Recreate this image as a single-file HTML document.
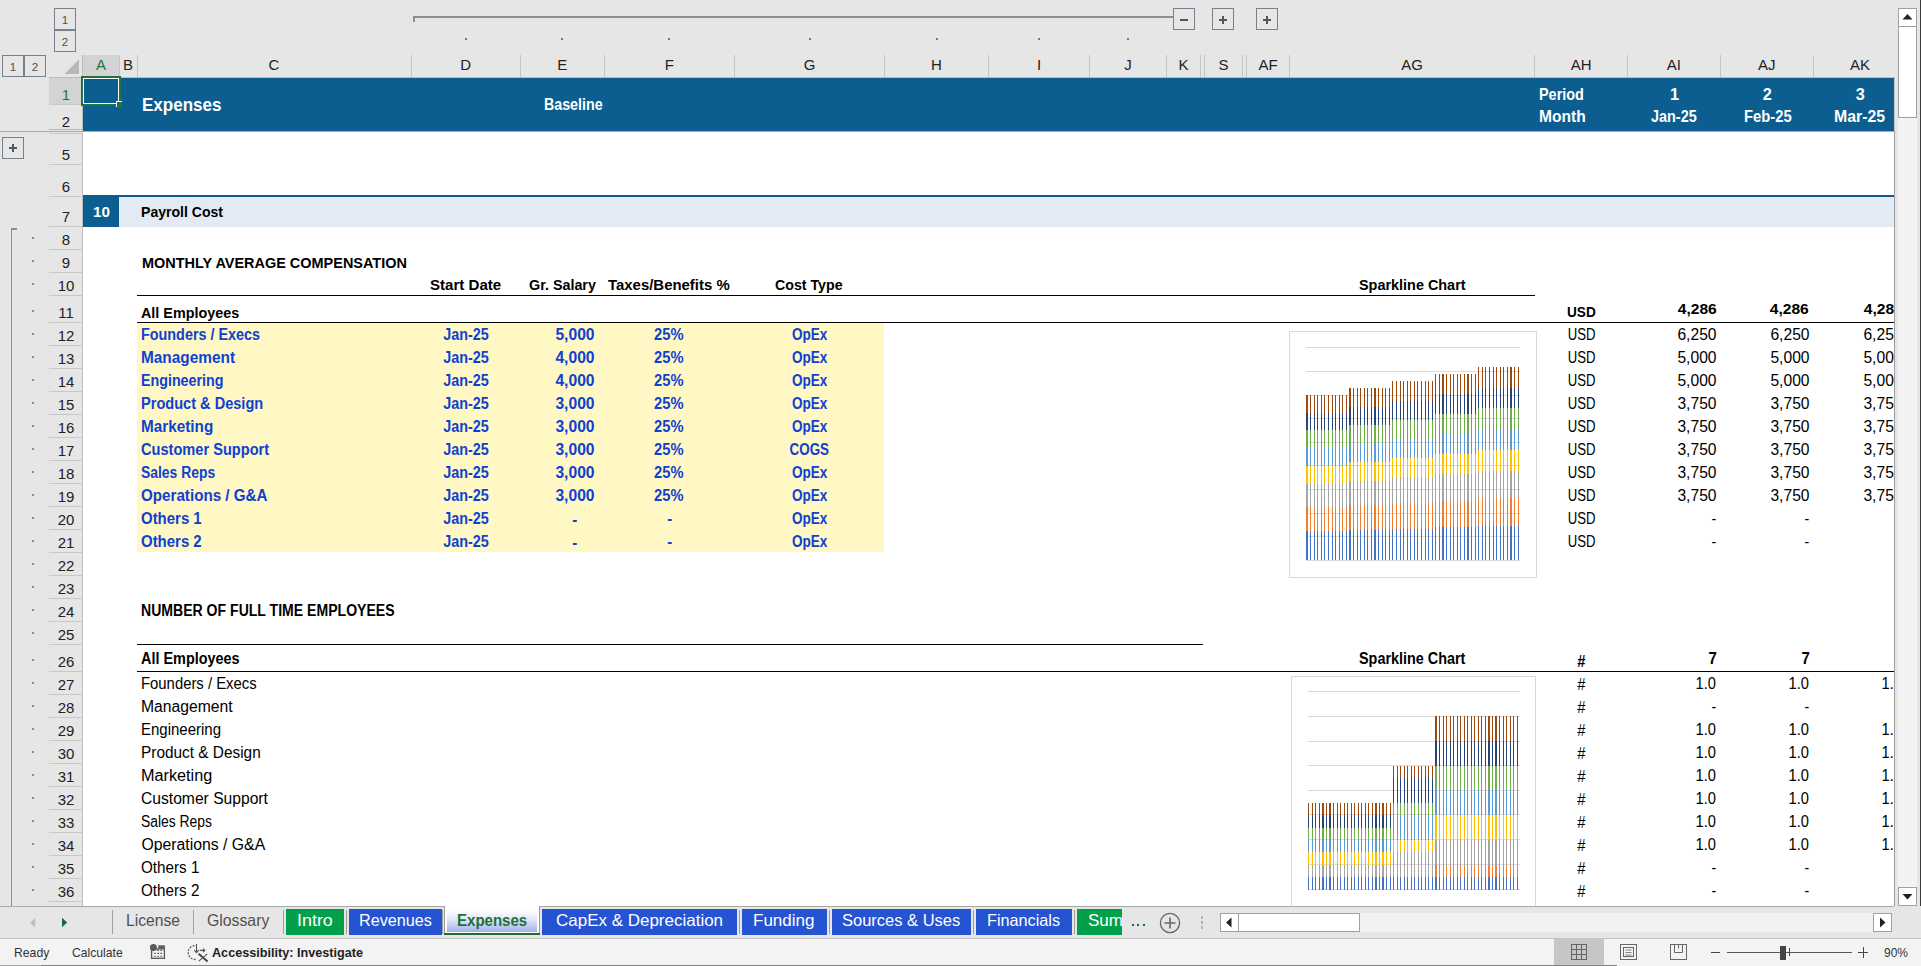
<!DOCTYPE html><html><head><meta charset="utf-8"><style>
html,body{margin:0;padding:0}
body{width:1921px;height:966px;overflow:hidden;position:relative;background:#e6e6e6;font-family:"Liberation Sans", sans-serif}
.b{position:absolute}
.t{position:absolute;white-space:nowrap;line-height:1}
</style></head><body>
<div class=b style='left:54px;top:8px;width:22.00px;height:22.00px;border:1px solid #77808c;box-sizing:border-box;'></div><div class=t style='left:54px;top:9px;width:22px;height:22px;line-height:22px;text-align:center;font-size:11.5px;color:#505050'>1</div><div class=b style='left:54px;top:30px;width:22.00px;height:22.00px;border:1px solid #77808c;box-sizing:border-box;'></div><div class=t style='left:54px;top:31px;width:22px;height:22px;line-height:22px;text-align:center;font-size:11.5px;color:#505050'>2</div><div class=b style='left:2px;top:55px;width:22.00px;height:22.00px;border:1px solid #77808c;box-sizing:border-box;'></div><div class=t style='left:2px;top:56px;width:22px;height:22px;line-height:22px;text-align:center;font-size:11.5px;color:#505050'>1</div><div class=b style='left:24px;top:55px;width:22.00px;height:22.00px;border:1px solid #77808c;box-sizing:border-box;'></div><div class=t style='left:24px;top:56px;width:22px;height:22px;line-height:22px;text-align:center;font-size:11.5px;color:#505050'>2</div><div class=b style='left:413px;top:16px;width:760.00px;height:2.00px;background:#8f8f8f'></div><div class=b style='left:413px;top:16px;width:2.00px;height:6.00px;background:#8f8f8f'></div><div class=b style='left:465px;top:38px;width:2.00px;height:2.00px;background:#7a7a7a'></div><div class=b style='left:561px;top:38px;width:2.00px;height:2.00px;background:#7a7a7a'></div><div class=b style='left:668px;top:38px;width:2.00px;height:2.00px;background:#7a7a7a'></div><div class=b style='left:809px;top:38px;width:2.00px;height:2.00px;background:#7a7a7a'></div><div class=b style='left:936px;top:38px;width:2.00px;height:2.00px;background:#7a7a7a'></div><div class=b style='left:1038px;top:38px;width:2.00px;height:2.00px;background:#7a7a7a'></div><div class=b style='left:1127px;top:38px;width:2.00px;height:2.00px;background:#7a7a7a'></div><div class=b style='left:1173px;top:8px;width:22.00px;height:22.00px;border:1px solid #77808c;box-sizing:border-box;'></div><div class=b style='left:1180.0px;top:19.0px;width:8.00px;height:2.00px;background:#555'></div><div class=b style='left:1212px;top:8px;width:22.00px;height:22.00px;border:1px solid #77808c;box-sizing:border-box;'></div><div class=b style='left:1219.0px;top:19.0px;width:8.00px;height:2.00px;background:#555'></div><div class=b style='left:1222.0px;top:16.0px;width:2.00px;height:8.00px;background:#555'></div><div class=b style='left:1256px;top:8px;width:22.00px;height:22.00px;border:1px solid #77808c;box-sizing:border-box;'></div><div class=b style='left:1263.0px;top:19.0px;width:8.00px;height:2.00px;background:#555'></div><div class=b style='left:1266.0px;top:16.0px;width:2.00px;height:8.00px;background:#555'></div><svg class=b style='left:63px;top:59px' width='18' height='17'><polygon points='16,0.3 16,15 1.5,15' fill='#b8b8b8'/></svg><div class=b style='left:83px;top:55px;width:1811.40px;height:22.00px;background:#e6e6e6'></div><div class=b style='left:83px;top:55px;width:36.00px;height:22.00px;background:#d3d3d3'></div><div class=b style='left:49px;top:76.5px;width:1845.40px;height:1.00px;background:#bcbcbc'></div><div class=b style='left:118.5px;top:55px;width:1.00px;height:22.00px;background:#c4c4c4'></div><div class=b style='left:136.5px;top:55px;width:1.00px;height:22.00px;background:#c4c4c4'></div><div class=b style='left:410.5px;top:55px;width:1.00px;height:22.00px;background:#c4c4c4'></div><div class=b style='left:520.0px;top:55px;width:1.00px;height:22.00px;background:#c4c4c4'></div><div class=b style='left:603.5px;top:55px;width:1.00px;height:22.00px;background:#c4c4c4'></div><div class=b style='left:734.0px;top:55px;width:1.00px;height:22.00px;background:#c4c4c4'></div><div class=b style='left:884.0px;top:55px;width:1.00px;height:22.00px;background:#c4c4c4'></div><div class=b style='left:988.0px;top:55px;width:1.00px;height:22.00px;background:#c4c4c4'></div><div class=b style='left:1089.0px;top:55px;width:1.00px;height:22.00px;background:#c4c4c4'></div><div class=b style='left:1166.25px;top:55px;width:1.00px;height:22.00px;background:#c4c4c4'></div><div class=b style='left:1200.0px;top:55px;width:1.00px;height:22.00px;background:#c4c4c4'></div><div class=b style='left:1204.0px;top:55px;width:1.00px;height:22.00px;background:#c4c4c4'></div><div class=b style='left:1242.0px;top:55px;width:1.00px;height:22.00px;background:#c4c4c4'></div><div class=b style='left:1246.0px;top:55px;width:1.00px;height:22.00px;background:#c4c4c4'></div><div class=b style='left:1289.0px;top:55px;width:1.00px;height:22.00px;background:#c4c4c4'></div><div class=b style='left:1534.2px;top:55px;width:1.00px;height:22.00px;background:#c4c4c4'></div><div class=b style='left:1627.0px;top:55px;width:1.00px;height:22.00px;background:#c4c4c4'></div><div class=b style='left:1719.8px;top:55px;width:1.00px;height:22.00px;background:#c4c4c4'></div><div class=b style='left:1812.9px;top:55px;width:1.00px;height:22.00px;background:#c4c4c4'></div><div class=t style='left:61.00px;width:80px;text-align:center;top:57.45px;font-size:15px;color:#217346'>A</div><div class=t style='left:88.00px;width:80px;text-align:center;top:57.45px;font-size:15px;color:#222'>B</div><div class=t style='left:234.00px;width:80px;text-align:center;top:57.45px;font-size:15px;color:#222'>C</div><div class=t style='left:425.75px;width:80px;text-align:center;top:57.45px;font-size:15px;color:#222'>D</div><div class=t style='left:522.25px;width:80px;text-align:center;top:57.45px;font-size:15px;color:#222'>E</div><div class=t style='left:629.25px;width:80px;text-align:center;top:57.45px;font-size:15px;color:#222'>F</div><div class=t style='left:769.50px;width:80px;text-align:center;top:57.45px;font-size:15px;color:#222'>G</div><div class=t style='left:896.50px;width:80px;text-align:center;top:57.45px;font-size:15px;color:#222'>H</div><div class=t style='left:999.00px;width:80px;text-align:center;top:57.45px;font-size:15px;color:#222'>I</div><div class=t style='left:1088.12px;width:80px;text-align:center;top:57.45px;font-size:15px;color:#222'>J</div><div class=t style='left:1143.62px;width:80px;text-align:center;top:57.45px;font-size:15px;color:#222'>K</div><div class=t style='left:1183.50px;width:80px;text-align:center;top:57.45px;font-size:15px;color:#222'>S</div><div class=t style='left:1228.00px;width:80px;text-align:center;top:57.45px;font-size:15px;color:#222'>AF</div><div class=t style='left:1372.10px;width:80px;text-align:center;top:57.45px;font-size:15px;color:#222'>AG</div><div class=t style='left:1541.10px;width:80px;text-align:center;top:57.45px;font-size:15px;color:#222'>AH</div><div class=t style='left:1633.90px;width:80px;text-align:center;top:57.45px;font-size:15px;color:#222'>AI</div><div class=t style='left:1726.85px;width:80px;text-align:center;top:57.45px;font-size:15px;color:#222'>AJ</div><div class=t style='left:1820.10px;width:80px;text-align:center;top:57.45px;font-size:15px;color:#222'>AK</div><div class=b style='left:49px;top:77px;width:33.50px;height:829.00px;background:#e6e6e6'></div><div class=b style='left:49px;top:77px;width:33.50px;height:27.50px;background:#d3d3d3'></div><div class=b style='left:82px;top:55px;width:1.00px;height:851.00px;background:#bcbcbc'></div><div class=b style='left:49px;top:104.0px;width:33.00px;height:1.00px;background:#c8c8c8'></div><div class=t style='left:26px;width:80px;text-align:center;top:87.25px;font-size:15px;color:#217346'>1</div><div class=b style='left:49px;top:130.5px;width:33.00px;height:1.00px;background:#c8c8c8'></div><div class=t style='left:26px;width:80px;text-align:center;top:113.75px;font-size:15px;color:#222'>2</div><div class=b style='left:49px;top:164.1px;width:33.00px;height:1.00px;background:#c8c8c8'></div><div class=t style='left:26px;width:80px;text-align:center;top:147.35px;font-size:15px;color:#222'>5</div><div class=b style='left:49px;top:196.1px;width:33.00px;height:1.00px;background:#c8c8c8'></div><div class=t style='left:26px;width:80px;text-align:center;top:179.35px;font-size:15px;color:#222'>6</div><div class=b style='left:49px;top:226.2px;width:33.00px;height:1.00px;background:#c8c8c8'></div><div class=t style='left:26px;width:80px;text-align:center;top:209.45px;font-size:15px;color:#222'>7</div><div class=b style='left:49px;top:248.5px;width:33.00px;height:1.00px;background:#c8c8c8'></div><div class=t style='left:26px;width:80px;text-align:center;top:231.75px;font-size:15px;color:#222'>8</div><div class=b style='left:49px;top:271.5px;width:33.00px;height:1.00px;background:#c8c8c8'></div><div class=t style='left:26px;width:80px;text-align:center;top:254.75px;font-size:15px;color:#222'>9</div><div class=b style='left:49px;top:294.5px;width:33.00px;height:1.00px;background:#c8c8c8'></div><div class=t style='left:26px;width:80px;text-align:center;top:277.75px;font-size:15px;color:#222'>10</div><div class=b style='left:49px;top:321.5px;width:33.00px;height:1.00px;background:#c8c8c8'></div><div class=t style='left:26px;width:80px;text-align:center;top:304.75px;font-size:15px;color:#222'>11</div><div class=b style='left:49px;top:344.5px;width:33.00px;height:1.00px;background:#c8c8c8'></div><div class=t style='left:26px;width:80px;text-align:center;top:327.75px;font-size:15px;color:#222'>12</div><div class=b style='left:49px;top:367.5px;width:33.00px;height:1.00px;background:#c8c8c8'></div><div class=t style='left:26px;width:80px;text-align:center;top:350.75px;font-size:15px;color:#222'>13</div><div class=b style='left:49px;top:390.5px;width:33.00px;height:1.00px;background:#c8c8c8'></div><div class=t style='left:26px;width:80px;text-align:center;top:373.75px;font-size:15px;color:#222'>14</div><div class=b style='left:49px;top:413.5px;width:33.00px;height:1.00px;background:#c8c8c8'></div><div class=t style='left:26px;width:80px;text-align:center;top:396.75px;font-size:15px;color:#222'>15</div><div class=b style='left:49px;top:436.5px;width:33.00px;height:1.00px;background:#c8c8c8'></div><div class=t style='left:26px;width:80px;text-align:center;top:419.75px;font-size:15px;color:#222'>16</div><div class=b style='left:49px;top:459.5px;width:33.00px;height:1.00px;background:#c8c8c8'></div><div class=t style='left:26px;width:80px;text-align:center;top:442.75px;font-size:15px;color:#222'>17</div><div class=b style='left:49px;top:482.5px;width:33.00px;height:1.00px;background:#c8c8c8'></div><div class=t style='left:26px;width:80px;text-align:center;top:465.75px;font-size:15px;color:#222'>18</div><div class=b style='left:49px;top:505.5px;width:33.00px;height:1.00px;background:#c8c8c8'></div><div class=t style='left:26px;width:80px;text-align:center;top:488.75px;font-size:15px;color:#222'>19</div><div class=b style='left:49px;top:528.5px;width:33.00px;height:1.00px;background:#c8c8c8'></div><div class=t style='left:26px;width:80px;text-align:center;top:511.75px;font-size:15px;color:#222'>20</div><div class=b style='left:49px;top:551.5px;width:33.00px;height:1.00px;background:#c8c8c8'></div><div class=t style='left:26px;width:80px;text-align:center;top:534.75px;font-size:15px;color:#222'>21</div><div class=b style='left:49px;top:574.5px;width:33.00px;height:1.00px;background:#c8c8c8'></div><div class=t style='left:26px;width:80px;text-align:center;top:557.75px;font-size:15px;color:#222'>22</div><div class=b style='left:49px;top:597.5px;width:33.00px;height:1.00px;background:#c8c8c8'></div><div class=t style='left:26px;width:80px;text-align:center;top:580.75px;font-size:15px;color:#222'>23</div><div class=b style='left:49px;top:620.5px;width:33.00px;height:1.00px;background:#c8c8c8'></div><div class=t style='left:26px;width:80px;text-align:center;top:603.75px;font-size:15px;color:#222'>24</div><div class=b style='left:49px;top:643.5px;width:33.00px;height:1.00px;background:#c8c8c8'></div><div class=t style='left:26px;width:80px;text-align:center;top:626.75px;font-size:15px;color:#222'>25</div><div class=b style='left:49px;top:670.5px;width:33.00px;height:1.00px;background:#c8c8c8'></div><div class=t style='left:26px;width:80px;text-align:center;top:653.75px;font-size:15px;color:#222'>26</div><div class=b style='left:49px;top:693.5px;width:33.00px;height:1.00px;background:#c8c8c8'></div><div class=t style='left:26px;width:80px;text-align:center;top:676.75px;font-size:15px;color:#222'>27</div><div class=b style='left:49px;top:716.5px;width:33.00px;height:1.00px;background:#c8c8c8'></div><div class=t style='left:26px;width:80px;text-align:center;top:699.75px;font-size:15px;color:#222'>28</div><div class=b style='left:49px;top:739.5px;width:33.00px;height:1.00px;background:#c8c8c8'></div><div class=t style='left:26px;width:80px;text-align:center;top:722.75px;font-size:15px;color:#222'>29</div><div class=b style='left:49px;top:762.5px;width:33.00px;height:1.00px;background:#c8c8c8'></div><div class=t style='left:26px;width:80px;text-align:center;top:745.75px;font-size:15px;color:#222'>30</div><div class=b style='left:49px;top:785.5px;width:33.00px;height:1.00px;background:#c8c8c8'></div><div class=t style='left:26px;width:80px;text-align:center;top:768.75px;font-size:15px;color:#222'>31</div><div class=b style='left:49px;top:808.5px;width:33.00px;height:1.00px;background:#c8c8c8'></div><div class=t style='left:26px;width:80px;text-align:center;top:791.75px;font-size:15px;color:#222'>32</div><div class=b style='left:49px;top:831.5px;width:33.00px;height:1.00px;background:#c8c8c8'></div><div class=t style='left:26px;width:80px;text-align:center;top:814.75px;font-size:15px;color:#222'>33</div><div class=b style='left:49px;top:854.5px;width:33.00px;height:1.00px;background:#c8c8c8'></div><div class=t style='left:26px;width:80px;text-align:center;top:837.75px;font-size:15px;color:#222'>34</div><div class=b style='left:49px;top:877.5px;width:33.00px;height:1.00px;background:#c8c8c8'></div><div class=t style='left:26px;width:80px;text-align:center;top:860.75px;font-size:15px;color:#222'>35</div><div class=b style='left:49px;top:900.5px;width:33.00px;height:1.00px;background:#c8c8c8'></div><div class=t style='left:26px;width:80px;text-align:center;top:883.75px;font-size:15px;color:#222'>36</div><div class=b style='left:49px;top:923.5px;width:33.00px;height:1.00px;background:#c8c8c8'></div><div class=b style='left:49px;top:133px;width:33.00px;height:1.00px;background:#c8c8c8'></div><div class=b style='left:49px;top:129px;width:33.00px;height:1.00px;background:#b8b8b8'></div><div class=b style='left:0px;top:130.5px;width:83.00px;height:1.00px;background:#a8a8a8'></div><div class=b style='left:2px;top:137px;width:22.00px;height:22.00px;border:1px solid #77808c;box-sizing:border-box;'></div><div class=b style='left:9px;top:147px;width:8.00px;height:2.00px;background:#555'></div><div class=b style='left:12px;top:144px;width:2.00px;height:8.00px;background:#555'></div><div class=b style='left:10.5px;top:228px;width:1.50px;height:678.00px;background:#8f8f8f'></div><div class=b style='left:10.5px;top:228px;width:6.00px;height:1.50px;background:#8f8f8f'></div><div class=b style='left:32px;top:237.0px;width:2.00px;height:2.00px;background:#8a8a8a'></div><div class=b style='left:32px;top:260.0px;width:2.00px;height:2.00px;background:#8a8a8a'></div><div class=b style='left:32px;top:283.0px;width:2.00px;height:2.00px;background:#8a8a8a'></div><div class=b style='left:32px;top:310.0px;width:2.00px;height:2.00px;background:#8a8a8a'></div><div class=b style='left:32px;top:333.0px;width:2.00px;height:2.00px;background:#8a8a8a'></div><div class=b style='left:32px;top:356.0px;width:2.00px;height:2.00px;background:#8a8a8a'></div><div class=b style='left:32px;top:379.0px;width:2.00px;height:2.00px;background:#8a8a8a'></div><div class=b style='left:32px;top:402.0px;width:2.00px;height:2.00px;background:#8a8a8a'></div><div class=b style='left:32px;top:425.0px;width:2.00px;height:2.00px;background:#8a8a8a'></div><div class=b style='left:32px;top:448.0px;width:2.00px;height:2.00px;background:#8a8a8a'></div><div class=b style='left:32px;top:471.0px;width:2.00px;height:2.00px;background:#8a8a8a'></div><div class=b style='left:32px;top:494.0px;width:2.00px;height:2.00px;background:#8a8a8a'></div><div class=b style='left:32px;top:517.0px;width:2.00px;height:2.00px;background:#8a8a8a'></div><div class=b style='left:32px;top:540.0px;width:2.00px;height:2.00px;background:#8a8a8a'></div><div class=b style='left:32px;top:563.0px;width:2.00px;height:2.00px;background:#8a8a8a'></div><div class=b style='left:32px;top:586.0px;width:2.00px;height:2.00px;background:#8a8a8a'></div><div class=b style='left:32px;top:609.0px;width:2.00px;height:2.00px;background:#8a8a8a'></div><div class=b style='left:32px;top:632.0px;width:2.00px;height:2.00px;background:#8a8a8a'></div><div class=b style='left:32px;top:659.0px;width:2.00px;height:2.00px;background:#8a8a8a'></div><div class=b style='left:32px;top:682.0px;width:2.00px;height:2.00px;background:#8a8a8a'></div><div class=b style='left:32px;top:705.0px;width:2.00px;height:2.00px;background:#8a8a8a'></div><div class=b style='left:32px;top:728.0px;width:2.00px;height:2.00px;background:#8a8a8a'></div><div class=b style='left:32px;top:751.0px;width:2.00px;height:2.00px;background:#8a8a8a'></div><div class=b style='left:32px;top:774.0px;width:2.00px;height:2.00px;background:#8a8a8a'></div><div class=b style='left:32px;top:797.0px;width:2.00px;height:2.00px;background:#8a8a8a'></div><div class=b style='left:32px;top:820.0px;width:2.00px;height:2.00px;background:#8a8a8a'></div><div class=b style='left:32px;top:843.0px;width:2.00px;height:2.00px;background:#8a8a8a'></div><div class=b style='left:32px;top:866.0px;width:2.00px;height:2.00px;background:#8a8a8a'></div><div class=b style='left:32px;top:889.0px;width:2.00px;height:2.00px;background:#8a8a8a'></div><div class=b style='left:32px;top:912.0px;width:2.00px;height:2.00px;background:#8a8a8a'></div><div class=b style='left:83px;top:77px;width:1811.4px;height:829px;overflow:hidden;background:#fff'><div class=b style='left:-83px;top:-77px;width:1921px;height:966px'><div class=b style='left:83px;top:77px;width:1811.40px;height:54.00px;background:#0c5e91'></div><div class=b style='left:83px;top:131px;width:1811.40px;height:1.00px;background:#ababab'></div><div class=b style='left:83px;top:195px;width:1811.40px;height:2.00px;background:#0c5e91'></div><div class=b style='left:83px;top:197px;width:1811.40px;height:29.70px;background:#e3eaf3'></div><div class=b style='left:83px;top:197px;width:36.00px;height:29.70px;background:#0c5e91'></div><div class=b style='left:137px;top:322.5px;width:747.00px;height:229.50px;background:#fff8c5'></div><div class=b style='left:137px;top:294.8px;width:1397.70px;height:1.00px;background:#000'></div><div class=b style='left:137px;top:321.8px;width:1757.40px;height:1.00px;background:#000'></div><div class=b style='left:137px;top:643.9px;width:1065.60px;height:1.00px;background:#000'></div><div class=b style='left:137px;top:670.9px;width:1757.40px;height:1.00px;background:#000'></div><svg class=b style='left:0;top:0' width='1921' height='966' shape-rendering='crispEdges'><rect x='1289.5' y='331.5' width='247' height='246' fill='#fff' stroke='#d9d9d9'/><rect x='1306' y='347' width='214' height='1' fill='#d9d9d9'/><rect x='1306' y='371' width='214' height='1' fill='#d9d9d9'/><rect x='1306' y='395' width='214' height='1' fill='#d9d9d9'/><rect x='1306' y='418' width='214' height='1' fill='#d9d9d9'/><rect x='1306' y='442' width='214' height='1' fill='#d9d9d9'/><rect x='1306' y='465' width='214' height='1' fill='#d9d9d9'/><rect x='1306' y='489' width='214' height='1' fill='#d9d9d9'/><rect x='1306' y='513' width='214' height='1' fill='#d9d9d9'/><rect x='1306' y='536' width='214' height='1' fill='#d9d9d9'/><rect x='1306' y='560' width='214' height='1' fill='#d9d9d9'/><rect x='1306' y='531' width='2' height='29' fill='#4472C4'/><rect x='1306' y='507' width='2' height='24' fill='#ED7D31'/><rect x='1306' y='484' width='2' height='23' fill='#A5A5A5'/><rect x='1306' y='466' width='2' height='18' fill='#FFC000'/><rect x='1306' y='448' width='2' height='18' fill='#5B9BD5'/><rect x='1306' y='430' width='2' height='18' fill='#70AD47'/><rect x='1306' y='413' width='2' height='17' fill='#264478'/><rect x='1306' y='395' width='2' height='18' fill='#9E480E'/><rect x='1310' y='531' width='1' height='29' fill='#4472C4'/><rect x='1310' y='507' width='1' height='24' fill='#ED7D31'/><rect x='1310' y='484' width='1' height='23' fill='#A5A5A5'/><rect x='1310' y='466' width='1' height='18' fill='#FFC000'/><rect x='1310' y='448' width='1' height='18' fill='#5B9BD5'/><rect x='1310' y='430' width='1' height='18' fill='#70AD47'/><rect x='1310' y='413' width='1' height='17' fill='#264478'/><rect x='1310' y='395' width='1' height='18' fill='#9E480E'/><rect x='1314' y='531' width='1' height='29' fill='#4472C4'/><rect x='1314' y='507' width='1' height='24' fill='#ED7D31'/><rect x='1314' y='484' width='1' height='23' fill='#A5A5A5'/><rect x='1314' y='466' width='1' height='18' fill='#FFC000'/><rect x='1314' y='448' width='1' height='18' fill='#5B9BD5'/><rect x='1314' y='430' width='1' height='18' fill='#70AD47'/><rect x='1314' y='413' width='1' height='17' fill='#264478'/><rect x='1314' y='395' width='1' height='18' fill='#9E480E'/><rect x='1317' y='531' width='1' height='29' fill='#4472C4'/><rect x='1317' y='507' width='1' height='24' fill='#ED7D31'/><rect x='1317' y='484' width='1' height='23' fill='#A5A5A5'/><rect x='1317' y='466' width='1' height='18' fill='#FFC000'/><rect x='1317' y='448' width='1' height='18' fill='#5B9BD5'/><rect x='1317' y='430' width='1' height='18' fill='#70AD47'/><rect x='1317' y='413' width='1' height='17' fill='#264478'/><rect x='1317' y='395' width='1' height='18' fill='#9E480E'/><rect x='1321' y='531' width='1' height='29' fill='#4472C4'/><rect x='1321' y='507' width='1' height='24' fill='#ED7D31'/><rect x='1321' y='484' width='1' height='23' fill='#A5A5A5'/><rect x='1321' y='466' width='1' height='18' fill='#FFC000'/><rect x='1321' y='448' width='1' height='18' fill='#5B9BD5'/><rect x='1321' y='430' width='1' height='18' fill='#70AD47'/><rect x='1321' y='413' width='1' height='17' fill='#264478'/><rect x='1321' y='395' width='1' height='18' fill='#9E480E'/><rect x='1324' y='531' width='1' height='29' fill='#4472C4'/><rect x='1324' y='507' width='1' height='24' fill='#ED7D31'/><rect x='1324' y='484' width='1' height='23' fill='#A5A5A5'/><rect x='1324' y='466' width='1' height='18' fill='#FFC000'/><rect x='1324' y='448' width='1' height='18' fill='#5B9BD5'/><rect x='1324' y='430' width='1' height='18' fill='#70AD47'/><rect x='1324' y='413' width='1' height='17' fill='#264478'/><rect x='1324' y='395' width='1' height='18' fill='#9E480E'/><rect x='1328' y='531' width='1' height='29' fill='#4472C4'/><rect x='1328' y='507' width='1' height='24' fill='#ED7D31'/><rect x='1328' y='484' width='1' height='23' fill='#A5A5A5'/><rect x='1328' y='466' width='1' height='18' fill='#FFC000'/><rect x='1328' y='448' width='1' height='18' fill='#5B9BD5'/><rect x='1328' y='430' width='1' height='18' fill='#70AD47'/><rect x='1328' y='413' width='1' height='17' fill='#264478'/><rect x='1328' y='395' width='1' height='18' fill='#9E480E'/><rect x='1332' y='531' width='1' height='29' fill='#4472C4'/><rect x='1332' y='507' width='1' height='24' fill='#ED7D31'/><rect x='1332' y='484' width='1' height='23' fill='#A5A5A5'/><rect x='1332' y='466' width='1' height='18' fill='#FFC000'/><rect x='1332' y='448' width='1' height='18' fill='#5B9BD5'/><rect x='1332' y='430' width='1' height='18' fill='#70AD47'/><rect x='1332' y='413' width='1' height='17' fill='#264478'/><rect x='1332' y='395' width='1' height='18' fill='#9E480E'/><rect x='1335' y='531' width='1' height='29' fill='#4472C4'/><rect x='1335' y='507' width='1' height='24' fill='#ED7D31'/><rect x='1335' y='484' width='1' height='23' fill='#A5A5A5'/><rect x='1335' y='466' width='1' height='18' fill='#FFC000'/><rect x='1335' y='448' width='1' height='18' fill='#5B9BD5'/><rect x='1335' y='430' width='1' height='18' fill='#70AD47'/><rect x='1335' y='413' width='1' height='17' fill='#264478'/><rect x='1335' y='395' width='1' height='18' fill='#9E480E'/><rect x='1339' y='531' width='1' height='29' fill='#4472C4'/><rect x='1339' y='507' width='1' height='24' fill='#ED7D31'/><rect x='1339' y='484' width='1' height='23' fill='#A5A5A5'/><rect x='1339' y='466' width='1' height='18' fill='#FFC000'/><rect x='1339' y='448' width='1' height='18' fill='#5B9BD5'/><rect x='1339' y='430' width='1' height='18' fill='#70AD47'/><rect x='1339' y='413' width='1' height='17' fill='#264478'/><rect x='1339' y='395' width='1' height='18' fill='#9E480E'/><rect x='1342' y='531' width='1' height='29' fill='#4472C4'/><rect x='1342' y='507' width='1' height='24' fill='#ED7D31'/><rect x='1342' y='484' width='1' height='23' fill='#A5A5A5'/><rect x='1342' y='466' width='1' height='18' fill='#FFC000'/><rect x='1342' y='448' width='1' height='18' fill='#5B9BD5'/><rect x='1342' y='430' width='1' height='18' fill='#70AD47'/><rect x='1342' y='413' width='1' height='17' fill='#264478'/><rect x='1342' y='395' width='1' height='18' fill='#9E480E'/><rect x='1346' y='531' width='1' height='29' fill='#4472C4'/><rect x='1346' y='507' width='1' height='24' fill='#ED7D31'/><rect x='1346' y='484' width='1' height='23' fill='#A5A5A5'/><rect x='1346' y='466' width='1' height='18' fill='#FFC000'/><rect x='1346' y='448' width='1' height='18' fill='#5B9BD5'/><rect x='1346' y='430' width='1' height='18' fill='#70AD47'/><rect x='1346' y='413' width='1' height='17' fill='#264478'/><rect x='1346' y='395' width='1' height='18' fill='#9E480E'/><rect x='1349' y='530' width='2' height='30' fill='#4472C4'/><rect x='1349' y='505' width='2' height='25' fill='#ED7D31'/><rect x='1349' y='481' width='2' height='24' fill='#A5A5A5'/><rect x='1349' y='462' width='2' height='19' fill='#FFC000'/><rect x='1349' y='444' width='2' height='18' fill='#5B9BD5'/><rect x='1349' y='425' width='2' height='19' fill='#70AD47'/><rect x='1349' y='407' width='2' height='18' fill='#264478'/><rect x='1349' y='388' width='2' height='19' fill='#9E480E'/><rect x='1353' y='530' width='1' height='30' fill='#4472C4'/><rect x='1353' y='505' width='1' height='25' fill='#ED7D31'/><rect x='1353' y='481' width='1' height='24' fill='#A5A5A5'/><rect x='1353' y='462' width='1' height='19' fill='#FFC000'/><rect x='1353' y='444' width='1' height='18' fill='#5B9BD5'/><rect x='1353' y='425' width='1' height='19' fill='#70AD47'/><rect x='1353' y='407' width='1' height='18' fill='#264478'/><rect x='1353' y='388' width='1' height='19' fill='#9E480E'/><rect x='1357' y='530' width='1' height='30' fill='#4472C4'/><rect x='1357' y='505' width='1' height='25' fill='#ED7D31'/><rect x='1357' y='481' width='1' height='24' fill='#A5A5A5'/><rect x='1357' y='462' width='1' height='19' fill='#FFC000'/><rect x='1357' y='444' width='1' height='18' fill='#5B9BD5'/><rect x='1357' y='425' width='1' height='19' fill='#70AD47'/><rect x='1357' y='407' width='1' height='18' fill='#264478'/><rect x='1357' y='388' width='1' height='19' fill='#9E480E'/><rect x='1360' y='530' width='1' height='30' fill='#4472C4'/><rect x='1360' y='505' width='1' height='25' fill='#ED7D31'/><rect x='1360' y='481' width='1' height='24' fill='#A5A5A5'/><rect x='1360' y='462' width='1' height='19' fill='#FFC000'/><rect x='1360' y='444' width='1' height='18' fill='#5B9BD5'/><rect x='1360' y='425' width='1' height='19' fill='#70AD47'/><rect x='1360' y='407' width='1' height='18' fill='#264478'/><rect x='1360' y='388' width='1' height='19' fill='#9E480E'/><rect x='1364' y='530' width='1' height='30' fill='#4472C4'/><rect x='1364' y='505' width='1' height='25' fill='#ED7D31'/><rect x='1364' y='481' width='1' height='24' fill='#A5A5A5'/><rect x='1364' y='462' width='1' height='19' fill='#FFC000'/><rect x='1364' y='444' width='1' height='18' fill='#5B9BD5'/><rect x='1364' y='425' width='1' height='19' fill='#70AD47'/><rect x='1364' y='407' width='1' height='18' fill='#264478'/><rect x='1364' y='388' width='1' height='19' fill='#9E480E'/><rect x='1367' y='530' width='1' height='30' fill='#4472C4'/><rect x='1367' y='505' width='1' height='25' fill='#ED7D31'/><rect x='1367' y='481' width='1' height='24' fill='#A5A5A5'/><rect x='1367' y='462' width='1' height='19' fill='#FFC000'/><rect x='1367' y='444' width='1' height='18' fill='#5B9BD5'/><rect x='1367' y='425' width='1' height='19' fill='#70AD47'/><rect x='1367' y='407' width='1' height='18' fill='#264478'/><rect x='1367' y='388' width='1' height='19' fill='#9E480E'/><rect x='1371' y='530' width='1' height='30' fill='#4472C4'/><rect x='1371' y='505' width='1' height='25' fill='#ED7D31'/><rect x='1371' y='481' width='1' height='24' fill='#A5A5A5'/><rect x='1371' y='462' width='1' height='19' fill='#FFC000'/><rect x='1371' y='444' width='1' height='18' fill='#5B9BD5'/><rect x='1371' y='425' width='1' height='19' fill='#70AD47'/><rect x='1371' y='407' width='1' height='18' fill='#264478'/><rect x='1371' y='388' width='1' height='19' fill='#9E480E'/><rect x='1374' y='530' width='2' height='30' fill='#4472C4'/><rect x='1374' y='505' width='2' height='25' fill='#ED7D31'/><rect x='1374' y='481' width='2' height='24' fill='#A5A5A5'/><rect x='1374' y='462' width='2' height='19' fill='#FFC000'/><rect x='1374' y='444' width='2' height='18' fill='#5B9BD5'/><rect x='1374' y='425' width='2' height='19' fill='#70AD47'/><rect x='1374' y='407' width='2' height='18' fill='#264478'/><rect x='1374' y='388' width='2' height='19' fill='#9E480E'/><rect x='1378' y='530' width='1' height='30' fill='#4472C4'/><rect x='1378' y='505' width='1' height='25' fill='#ED7D31'/><rect x='1378' y='481' width='1' height='24' fill='#A5A5A5'/><rect x='1378' y='462' width='1' height='19' fill='#FFC000'/><rect x='1378' y='444' width='1' height='18' fill='#5B9BD5'/><rect x='1378' y='425' width='1' height='19' fill='#70AD47'/><rect x='1378' y='407' width='1' height='18' fill='#264478'/><rect x='1378' y='388' width='1' height='19' fill='#9E480E'/><rect x='1382' y='530' width='1' height='30' fill='#4472C4'/><rect x='1382' y='505' width='1' height='25' fill='#ED7D31'/><rect x='1382' y='481' width='1' height='24' fill='#A5A5A5'/><rect x='1382' y='462' width='1' height='19' fill='#FFC000'/><rect x='1382' y='444' width='1' height='18' fill='#5B9BD5'/><rect x='1382' y='425' width='1' height='19' fill='#70AD47'/><rect x='1382' y='407' width='1' height='18' fill='#264478'/><rect x='1382' y='388' width='1' height='19' fill='#9E480E'/><rect x='1385' y='530' width='1' height='30' fill='#4472C4'/><rect x='1385' y='505' width='1' height='25' fill='#ED7D31'/><rect x='1385' y='481' width='1' height='24' fill='#A5A5A5'/><rect x='1385' y='462' width='1' height='19' fill='#FFC000'/><rect x='1385' y='444' width='1' height='18' fill='#5B9BD5'/><rect x='1385' y='425' width='1' height='19' fill='#70AD47'/><rect x='1385' y='407' width='1' height='18' fill='#264478'/><rect x='1385' y='388' width='1' height='19' fill='#9E480E'/><rect x='1389' y='530' width='1' height='30' fill='#4472C4'/><rect x='1389' y='505' width='1' height='25' fill='#ED7D31'/><rect x='1389' y='481' width='1' height='24' fill='#A5A5A5'/><rect x='1389' y='462' width='1' height='19' fill='#FFC000'/><rect x='1389' y='444' width='1' height='18' fill='#5B9BD5'/><rect x='1389' y='425' width='1' height='19' fill='#70AD47'/><rect x='1389' y='407' width='1' height='18' fill='#264478'/><rect x='1389' y='388' width='1' height='19' fill='#9E480E'/><rect x='1392' y='529' width='1' height='31' fill='#4472C4'/><rect x='1392' y='503' width='1' height='26' fill='#ED7D31'/><rect x='1392' y='477' width='1' height='26' fill='#A5A5A5'/><rect x='1392' y='458' width='1' height='19' fill='#FFC000'/><rect x='1392' y='439' width='1' height='19' fill='#5B9BD5'/><rect x='1392' y='420' width='1' height='19' fill='#70AD47'/><rect x='1392' y='401' width='1' height='19' fill='#264478'/><rect x='1392' y='381' width='1' height='20' fill='#9E480E'/><rect x='1396' y='529' width='1' height='31' fill='#4472C4'/><rect x='1396' y='503' width='1' height='26' fill='#ED7D31'/><rect x='1396' y='477' width='1' height='26' fill='#A5A5A5'/><rect x='1396' y='458' width='1' height='19' fill='#FFC000'/><rect x='1396' y='439' width='1' height='19' fill='#5B9BD5'/><rect x='1396' y='420' width='1' height='19' fill='#70AD47'/><rect x='1396' y='401' width='1' height='19' fill='#264478'/><rect x='1396' y='381' width='1' height='20' fill='#9E480E'/><rect x='1400' y='529' width='1' height='31' fill='#4472C4'/><rect x='1400' y='503' width='1' height='26' fill='#ED7D31'/><rect x='1400' y='477' width='1' height='26' fill='#A5A5A5'/><rect x='1400' y='458' width='1' height='19' fill='#FFC000'/><rect x='1400' y='439' width='1' height='19' fill='#5B9BD5'/><rect x='1400' y='420' width='1' height='19' fill='#70AD47'/><rect x='1400' y='401' width='1' height='19' fill='#264478'/><rect x='1400' y='381' width='1' height='20' fill='#9E480E'/><rect x='1403' y='529' width='1' height='31' fill='#4472C4'/><rect x='1403' y='503' width='1' height='26' fill='#ED7D31'/><rect x='1403' y='477' width='1' height='26' fill='#A5A5A5'/><rect x='1403' y='458' width='1' height='19' fill='#FFC000'/><rect x='1403' y='439' width='1' height='19' fill='#5B9BD5'/><rect x='1403' y='420' width='1' height='19' fill='#70AD47'/><rect x='1403' y='401' width='1' height='19' fill='#264478'/><rect x='1403' y='381' width='1' height='20' fill='#9E480E'/><rect x='1407' y='529' width='1' height='31' fill='#4472C4'/><rect x='1407' y='503' width='1' height='26' fill='#ED7D31'/><rect x='1407' y='477' width='1' height='26' fill='#A5A5A5'/><rect x='1407' y='458' width='1' height='19' fill='#FFC000'/><rect x='1407' y='439' width='1' height='19' fill='#5B9BD5'/><rect x='1407' y='420' width='1' height='19' fill='#70AD47'/><rect x='1407' y='401' width='1' height='19' fill='#264478'/><rect x='1407' y='381' width='1' height='20' fill='#9E480E'/><rect x='1410' y='529' width='1' height='31' fill='#4472C4'/><rect x='1410' y='503' width='1' height='26' fill='#ED7D31'/><rect x='1410' y='477' width='1' height='26' fill='#A5A5A5'/><rect x='1410' y='458' width='1' height='19' fill='#FFC000'/><rect x='1410' y='439' width='1' height='19' fill='#5B9BD5'/><rect x='1410' y='420' width='1' height='19' fill='#70AD47'/><rect x='1410' y='401' width='1' height='19' fill='#264478'/><rect x='1410' y='381' width='1' height='20' fill='#9E480E'/><rect x='1414' y='529' width='1' height='31' fill='#4472C4'/><rect x='1414' y='503' width='1' height='26' fill='#ED7D31'/><rect x='1414' y='477' width='1' height='26' fill='#A5A5A5'/><rect x='1414' y='458' width='1' height='19' fill='#FFC000'/><rect x='1414' y='439' width='1' height='19' fill='#5B9BD5'/><rect x='1414' y='420' width='1' height='19' fill='#70AD47'/><rect x='1414' y='401' width='1' height='19' fill='#264478'/><rect x='1414' y='381' width='1' height='20' fill='#9E480E'/><rect x='1417' y='529' width='1' height='31' fill='#4472C4'/><rect x='1417' y='503' width='1' height='26' fill='#ED7D31'/><rect x='1417' y='477' width='1' height='26' fill='#A5A5A5'/><rect x='1417' y='458' width='1' height='19' fill='#FFC000'/><rect x='1417' y='439' width='1' height='19' fill='#5B9BD5'/><rect x='1417' y='420' width='1' height='19' fill='#70AD47'/><rect x='1417' y='401' width='1' height='19' fill='#264478'/><rect x='1417' y='381' width='1' height='20' fill='#9E480E'/><rect x='1421' y='529' width='1' height='31' fill='#4472C4'/><rect x='1421' y='503' width='1' height='26' fill='#ED7D31'/><rect x='1421' y='477' width='1' height='26' fill='#A5A5A5'/><rect x='1421' y='458' width='1' height='19' fill='#FFC000'/><rect x='1421' y='439' width='1' height='19' fill='#5B9BD5'/><rect x='1421' y='420' width='1' height='19' fill='#70AD47'/><rect x='1421' y='401' width='1' height='19' fill='#264478'/><rect x='1421' y='381' width='1' height='20' fill='#9E480E'/><rect x='1425' y='529' width='1' height='31' fill='#4472C4'/><rect x='1425' y='503' width='1' height='26' fill='#ED7D31'/><rect x='1425' y='477' width='1' height='26' fill='#A5A5A5'/><rect x='1425' y='458' width='1' height='19' fill='#FFC000'/><rect x='1425' y='439' width='1' height='19' fill='#5B9BD5'/><rect x='1425' y='420' width='1' height='19' fill='#70AD47'/><rect x='1425' y='401' width='1' height='19' fill='#264478'/><rect x='1425' y='381' width='1' height='20' fill='#9E480E'/><rect x='1428' y='529' width='1' height='31' fill='#4472C4'/><rect x='1428' y='503' width='1' height='26' fill='#ED7D31'/><rect x='1428' y='477' width='1' height='26' fill='#A5A5A5'/><rect x='1428' y='458' width='1' height='19' fill='#FFC000'/><rect x='1428' y='439' width='1' height='19' fill='#5B9BD5'/><rect x='1428' y='420' width='1' height='19' fill='#70AD47'/><rect x='1428' y='401' width='1' height='19' fill='#264478'/><rect x='1428' y='381' width='1' height='20' fill='#9E480E'/><rect x='1432' y='529' width='1' height='31' fill='#4472C4'/><rect x='1432' y='503' width='1' height='26' fill='#ED7D31'/><rect x='1432' y='477' width='1' height='26' fill='#A5A5A5'/><rect x='1432' y='458' width='1' height='19' fill='#FFC000'/><rect x='1432' y='439' width='1' height='19' fill='#5B9BD5'/><rect x='1432' y='420' width='1' height='19' fill='#70AD47'/><rect x='1432' y='401' width='1' height='19' fill='#264478'/><rect x='1432' y='381' width='1' height='20' fill='#9E480E'/><rect x='1435' y='527' width='1' height='33' fill='#4472C4'/><rect x='1435' y='501' width='1' height='26' fill='#ED7D31'/><rect x='1435' y='474' width='1' height='27' fill='#A5A5A5'/><rect x='1435' y='454' width='1' height='20' fill='#FFC000'/><rect x='1435' y='434' width='1' height='20' fill='#5B9BD5'/><rect x='1435' y='414' width='1' height='20' fill='#70AD47'/><rect x='1435' y='394' width='1' height='20' fill='#264478'/><rect x='1435' y='374' width='1' height='20' fill='#9E480E'/><rect x='1439' y='527' width='1' height='33' fill='#4472C4'/><rect x='1439' y='501' width='1' height='26' fill='#ED7D31'/><rect x='1439' y='474' width='1' height='27' fill='#A5A5A5'/><rect x='1439' y='454' width='1' height='20' fill='#FFC000'/><rect x='1439' y='434' width='1' height='20' fill='#5B9BD5'/><rect x='1439' y='414' width='1' height='20' fill='#70AD47'/><rect x='1439' y='394' width='1' height='20' fill='#264478'/><rect x='1439' y='374' width='1' height='20' fill='#9E480E'/><rect x='1442' y='527' width='2' height='33' fill='#4472C4'/><rect x='1442' y='501' width='2' height='26' fill='#ED7D31'/><rect x='1442' y='474' width='2' height='27' fill='#A5A5A5'/><rect x='1442' y='454' width='2' height='20' fill='#FFC000'/><rect x='1442' y='434' width='2' height='20' fill='#5B9BD5'/><rect x='1442' y='414' width='2' height='20' fill='#70AD47'/><rect x='1442' y='394' width='2' height='20' fill='#264478'/><rect x='1442' y='374' width='2' height='20' fill='#9E480E'/><rect x='1446' y='527' width='1' height='33' fill='#4472C4'/><rect x='1446' y='501' width='1' height='26' fill='#ED7D31'/><rect x='1446' y='474' width='1' height='27' fill='#A5A5A5'/><rect x='1446' y='454' width='1' height='20' fill='#FFC000'/><rect x='1446' y='434' width='1' height='20' fill='#5B9BD5'/><rect x='1446' y='414' width='1' height='20' fill='#70AD47'/><rect x='1446' y='394' width='1' height='20' fill='#264478'/><rect x='1446' y='374' width='1' height='20' fill='#9E480E'/><rect x='1450' y='527' width='1' height='33' fill='#4472C4'/><rect x='1450' y='501' width='1' height='26' fill='#ED7D31'/><rect x='1450' y='474' width='1' height='27' fill='#A5A5A5'/><rect x='1450' y='454' width='1' height='20' fill='#FFC000'/><rect x='1450' y='434' width='1' height='20' fill='#5B9BD5'/><rect x='1450' y='414' width='1' height='20' fill='#70AD47'/><rect x='1450' y='394' width='1' height='20' fill='#264478'/><rect x='1450' y='374' width='1' height='20' fill='#9E480E'/><rect x='1453' y='527' width='1' height='33' fill='#4472C4'/><rect x='1453' y='501' width='1' height='26' fill='#ED7D31'/><rect x='1453' y='474' width='1' height='27' fill='#A5A5A5'/><rect x='1453' y='454' width='1' height='20' fill='#FFC000'/><rect x='1453' y='434' width='1' height='20' fill='#5B9BD5'/><rect x='1453' y='414' width='1' height='20' fill='#70AD47'/><rect x='1453' y='394' width='1' height='20' fill='#264478'/><rect x='1453' y='374' width='1' height='20' fill='#9E480E'/><rect x='1457' y='527' width='1' height='33' fill='#4472C4'/><rect x='1457' y='501' width='1' height='26' fill='#ED7D31'/><rect x='1457' y='474' width='1' height='27' fill='#A5A5A5'/><rect x='1457' y='454' width='1' height='20' fill='#FFC000'/><rect x='1457' y='434' width='1' height='20' fill='#5B9BD5'/><rect x='1457' y='414' width='1' height='20' fill='#70AD47'/><rect x='1457' y='394' width='1' height='20' fill='#264478'/><rect x='1457' y='374' width='1' height='20' fill='#9E480E'/><rect x='1460' y='527' width='1' height='33' fill='#4472C4'/><rect x='1460' y='501' width='1' height='26' fill='#ED7D31'/><rect x='1460' y='474' width='1' height='27' fill='#A5A5A5'/><rect x='1460' y='454' width='1' height='20' fill='#FFC000'/><rect x='1460' y='434' width='1' height='20' fill='#5B9BD5'/><rect x='1460' y='414' width='1' height='20' fill='#70AD47'/><rect x='1460' y='394' width='1' height='20' fill='#264478'/><rect x='1460' y='374' width='1' height='20' fill='#9E480E'/><rect x='1464' y='527' width='1' height='33' fill='#4472C4'/><rect x='1464' y='501' width='1' height='26' fill='#ED7D31'/><rect x='1464' y='474' width='1' height='27' fill='#A5A5A5'/><rect x='1464' y='454' width='1' height='20' fill='#FFC000'/><rect x='1464' y='434' width='1' height='20' fill='#5B9BD5'/><rect x='1464' y='414' width='1' height='20' fill='#70AD47'/><rect x='1464' y='394' width='1' height='20' fill='#264478'/><rect x='1464' y='374' width='1' height='20' fill='#9E480E'/><rect x='1467' y='527' width='2' height='33' fill='#4472C4'/><rect x='1467' y='501' width='2' height='26' fill='#ED7D31'/><rect x='1467' y='474' width='2' height='27' fill='#A5A5A5'/><rect x='1467' y='454' width='2' height='20' fill='#FFC000'/><rect x='1467' y='434' width='2' height='20' fill='#5B9BD5'/><rect x='1467' y='414' width='2' height='20' fill='#70AD47'/><rect x='1467' y='394' width='2' height='20' fill='#264478'/><rect x='1467' y='374' width='2' height='20' fill='#9E480E'/><rect x='1471' y='527' width='1' height='33' fill='#4472C4'/><rect x='1471' y='501' width='1' height='26' fill='#ED7D31'/><rect x='1471' y='474' width='1' height='27' fill='#A5A5A5'/><rect x='1471' y='454' width='1' height='20' fill='#FFC000'/><rect x='1471' y='434' width='1' height='20' fill='#5B9BD5'/><rect x='1471' y='414' width='1' height='20' fill='#70AD47'/><rect x='1471' y='394' width='1' height='20' fill='#264478'/><rect x='1471' y='374' width='1' height='20' fill='#9E480E'/><rect x='1475' y='527' width='1' height='33' fill='#4472C4'/><rect x='1475' y='501' width='1' height='26' fill='#ED7D31'/><rect x='1475' y='474' width='1' height='27' fill='#A5A5A5'/><rect x='1475' y='454' width='1' height='20' fill='#FFC000'/><rect x='1475' y='434' width='1' height='20' fill='#5B9BD5'/><rect x='1475' y='414' width='1' height='20' fill='#70AD47'/><rect x='1475' y='394' width='1' height='20' fill='#264478'/><rect x='1475' y='374' width='1' height='20' fill='#9E480E'/><rect x='1478' y='526' width='1' height='34' fill='#4472C4'/><rect x='1478' y='498' width='1' height='28' fill='#ED7D31'/><rect x='1478' y='471' width='1' height='27' fill='#A5A5A5'/><rect x='1478' y='450' width='1' height='21' fill='#FFC000'/><rect x='1478' y='429' width='1' height='21' fill='#5B9BD5'/><rect x='1478' y='408' width='1' height='21' fill='#70AD47'/><rect x='1478' y='388' width='1' height='20' fill='#264478'/><rect x='1478' y='367' width='1' height='21' fill='#9E480E'/><rect x='1482' y='526' width='1' height='34' fill='#4472C4'/><rect x='1482' y='498' width='1' height='28' fill='#ED7D31'/><rect x='1482' y='471' width='1' height='27' fill='#A5A5A5'/><rect x='1482' y='450' width='1' height='21' fill='#FFC000'/><rect x='1482' y='429' width='1' height='21' fill='#5B9BD5'/><rect x='1482' y='408' width='1' height='21' fill='#70AD47'/><rect x='1482' y='388' width='1' height='20' fill='#264478'/><rect x='1482' y='367' width='1' height='21' fill='#9E480E'/><rect x='1485' y='526' width='1' height='34' fill='#4472C4'/><rect x='1485' y='498' width='1' height='28' fill='#ED7D31'/><rect x='1485' y='471' width='1' height='27' fill='#A5A5A5'/><rect x='1485' y='450' width='1' height='21' fill='#FFC000'/><rect x='1485' y='429' width='1' height='21' fill='#5B9BD5'/><rect x='1485' y='408' width='1' height='21' fill='#70AD47'/><rect x='1485' y='388' width='1' height='20' fill='#264478'/><rect x='1485' y='367' width='1' height='21' fill='#9E480E'/><rect x='1489' y='526' width='1' height='34' fill='#4472C4'/><rect x='1489' y='498' width='1' height='28' fill='#ED7D31'/><rect x='1489' y='471' width='1' height='27' fill='#A5A5A5'/><rect x='1489' y='450' width='1' height='21' fill='#FFC000'/><rect x='1489' y='429' width='1' height='21' fill='#5B9BD5'/><rect x='1489' y='408' width='1' height='21' fill='#70AD47'/><rect x='1489' y='388' width='1' height='20' fill='#264478'/><rect x='1489' y='367' width='1' height='21' fill='#9E480E'/><rect x='1493' y='526' width='1' height='34' fill='#4472C4'/><rect x='1493' y='498' width='1' height='28' fill='#ED7D31'/><rect x='1493' y='471' width='1' height='27' fill='#A5A5A5'/><rect x='1493' y='450' width='1' height='21' fill='#FFC000'/><rect x='1493' y='429' width='1' height='21' fill='#5B9BD5'/><rect x='1493' y='408' width='1' height='21' fill='#70AD47'/><rect x='1493' y='388' width='1' height='20' fill='#264478'/><rect x='1493' y='367' width='1' height='21' fill='#9E480E'/><rect x='1496' y='526' width='1' height='34' fill='#4472C4'/><rect x='1496' y='498' width='1' height='28' fill='#ED7D31'/><rect x='1496' y='471' width='1' height='27' fill='#A5A5A5'/><rect x='1496' y='450' width='1' height='21' fill='#FFC000'/><rect x='1496' y='429' width='1' height='21' fill='#5B9BD5'/><rect x='1496' y='408' width='1' height='21' fill='#70AD47'/><rect x='1496' y='388' width='1' height='20' fill='#264478'/><rect x='1496' y='367' width='1' height='21' fill='#9E480E'/><rect x='1500' y='526' width='1' height='34' fill='#4472C4'/><rect x='1500' y='498' width='1' height='28' fill='#ED7D31'/><rect x='1500' y='471' width='1' height='27' fill='#A5A5A5'/><rect x='1500' y='450' width='1' height='21' fill='#FFC000'/><rect x='1500' y='429' width='1' height='21' fill='#5B9BD5'/><rect x='1500' y='408' width='1' height='21' fill='#70AD47'/><rect x='1500' y='388' width='1' height='20' fill='#264478'/><rect x='1500' y='367' width='1' height='21' fill='#9E480E'/><rect x='1503' y='526' width='1' height='34' fill='#4472C4'/><rect x='1503' y='498' width='1' height='28' fill='#ED7D31'/><rect x='1503' y='471' width='1' height='27' fill='#A5A5A5'/><rect x='1503' y='450' width='1' height='21' fill='#FFC000'/><rect x='1503' y='429' width='1' height='21' fill='#5B9BD5'/><rect x='1503' y='408' width='1' height='21' fill='#70AD47'/><rect x='1503' y='388' width='1' height='20' fill='#264478'/><rect x='1503' y='367' width='1' height='21' fill='#9E480E'/><rect x='1507' y='526' width='1' height='34' fill='#4472C4'/><rect x='1507' y='498' width='1' height='28' fill='#ED7D31'/><rect x='1507' y='471' width='1' height='27' fill='#A5A5A5'/><rect x='1507' y='450' width='1' height='21' fill='#FFC000'/><rect x='1507' y='429' width='1' height='21' fill='#5B9BD5'/><rect x='1507' y='408' width='1' height='21' fill='#70AD47'/><rect x='1507' y='388' width='1' height='20' fill='#264478'/><rect x='1507' y='367' width='1' height='21' fill='#9E480E'/><rect x='1510' y='526' width='2' height='34' fill='#4472C4'/><rect x='1510' y='498' width='2' height='28' fill='#ED7D31'/><rect x='1510' y='471' width='2' height='27' fill='#A5A5A5'/><rect x='1510' y='450' width='2' height='21' fill='#FFC000'/><rect x='1510' y='429' width='2' height='21' fill='#5B9BD5'/><rect x='1510' y='408' width='2' height='21' fill='#70AD47'/><rect x='1510' y='388' width='2' height='20' fill='#264478'/><rect x='1510' y='367' width='2' height='21' fill='#9E480E'/><rect x='1514' y='526' width='1' height='34' fill='#4472C4'/><rect x='1514' y='498' width='1' height='28' fill='#ED7D31'/><rect x='1514' y='471' width='1' height='27' fill='#A5A5A5'/><rect x='1514' y='450' width='1' height='21' fill='#FFC000'/><rect x='1514' y='429' width='1' height='21' fill='#5B9BD5'/><rect x='1514' y='408' width='1' height='21' fill='#70AD47'/><rect x='1514' y='388' width='1' height='20' fill='#264478'/><rect x='1514' y='367' width='1' height='21' fill='#9E480E'/><rect x='1518' y='526' width='1' height='34' fill='#4472C4'/><rect x='1518' y='498' width='1' height='28' fill='#ED7D31'/><rect x='1518' y='471' width='1' height='27' fill='#A5A5A5'/><rect x='1518' y='450' width='1' height='21' fill='#FFC000'/><rect x='1518' y='429' width='1' height='21' fill='#5B9BD5'/><rect x='1518' y='408' width='1' height='21' fill='#70AD47'/><rect x='1518' y='388' width='1' height='20' fill='#264478'/><rect x='1518' y='367' width='1' height='21' fill='#9E480E'/><rect x='1291.5' y='676.0' width='244' height='245.5' fill='#fff' stroke='#d9d9d9'/><rect x='1308' y='691' width='212' height='1' fill='#d9d9d9'/><rect x='1308' y='716' width='212' height='1' fill='#d9d9d9'/><rect x='1308' y='741' width='212' height='1' fill='#d9d9d9'/><rect x='1308' y='765' width='212' height='1' fill='#d9d9d9'/><rect x='1308' y='790' width='212' height='1' fill='#d9d9d9'/><rect x='1308' y='814' width='212' height='1' fill='#d9d9d9'/><rect x='1308' y='839' width='212' height='1' fill='#d9d9d9'/><rect x='1308' y='864' width='212' height='1' fill='#d9d9d9'/><rect x='1308' y='889' width='212' height='1' fill='#d9d9d9'/><rect x='1308' y='877' width='1' height='13' fill='#4472C4'/><rect x='1308' y='865' width='1' height='12' fill='#A5A5A5'/><rect x='1308' y='852' width='1' height='13' fill='#FFC000'/><rect x='1308' y='840' width='1' height='12' fill='#5B9BD5'/><rect x='1308' y='828' width='1' height='12' fill='#70AD47'/><rect x='1308' y='815' width='1' height='13' fill='#264478'/><rect x='1308' y='803' width='1' height='12' fill='#9E480E'/><rect x='1312' y='877' width='1' height='13' fill='#4472C4'/><rect x='1312' y='865' width='1' height='12' fill='#A5A5A5'/><rect x='1312' y='852' width='1' height='13' fill='#FFC000'/><rect x='1312' y='840' width='1' height='12' fill='#5B9BD5'/><rect x='1312' y='828' width='1' height='12' fill='#70AD47'/><rect x='1312' y='815' width='1' height='13' fill='#264478'/><rect x='1312' y='803' width='1' height='12' fill='#9E480E'/><rect x='1315' y='877' width='1' height='13' fill='#4472C4'/><rect x='1315' y='865' width='1' height='12' fill='#A5A5A5'/><rect x='1315' y='852' width='1' height='13' fill='#FFC000'/><rect x='1315' y='840' width='1' height='12' fill='#5B9BD5'/><rect x='1315' y='828' width='1' height='12' fill='#70AD47'/><rect x='1315' y='815' width='1' height='13' fill='#264478'/><rect x='1315' y='803' width='1' height='12' fill='#9E480E'/><rect x='1319' y='877' width='1' height='13' fill='#4472C4'/><rect x='1319' y='865' width='1' height='12' fill='#A5A5A5'/><rect x='1319' y='852' width='1' height='13' fill='#FFC000'/><rect x='1319' y='840' width='1' height='12' fill='#5B9BD5'/><rect x='1319' y='828' width='1' height='12' fill='#70AD47'/><rect x='1319' y='815' width='1' height='13' fill='#264478'/><rect x='1319' y='803' width='1' height='12' fill='#9E480E'/><rect x='1322' y='877' width='2' height='13' fill='#4472C4'/><rect x='1322' y='865' width='2' height='12' fill='#A5A5A5'/><rect x='1322' y='852' width='2' height='13' fill='#FFC000'/><rect x='1322' y='840' width='2' height='12' fill='#5B9BD5'/><rect x='1322' y='828' width='2' height='12' fill='#70AD47'/><rect x='1322' y='815' width='2' height='13' fill='#264478'/><rect x='1322' y='803' width='2' height='12' fill='#9E480E'/><rect x='1326' y='877' width='1' height='13' fill='#4472C4'/><rect x='1326' y='865' width='1' height='12' fill='#A5A5A5'/><rect x='1326' y='852' width='1' height='13' fill='#FFC000'/><rect x='1326' y='840' width='1' height='12' fill='#5B9BD5'/><rect x='1326' y='828' width='1' height='12' fill='#70AD47'/><rect x='1326' y='815' width='1' height='13' fill='#264478'/><rect x='1326' y='803' width='1' height='12' fill='#9E480E'/><rect x='1329' y='877' width='2' height='13' fill='#4472C4'/><rect x='1329' y='865' width='2' height='12' fill='#A5A5A5'/><rect x='1329' y='852' width='2' height='13' fill='#FFC000'/><rect x='1329' y='840' width='2' height='12' fill='#5B9BD5'/><rect x='1329' y='828' width='2' height='12' fill='#70AD47'/><rect x='1329' y='815' width='2' height='13' fill='#264478'/><rect x='1329' y='803' width='2' height='12' fill='#9E480E'/><rect x='1333' y='877' width='1' height='13' fill='#4472C4'/><rect x='1333' y='865' width='1' height='12' fill='#A5A5A5'/><rect x='1333' y='852' width='1' height='13' fill='#FFC000'/><rect x='1333' y='840' width='1' height='12' fill='#5B9BD5'/><rect x='1333' y='828' width='1' height='12' fill='#70AD47'/><rect x='1333' y='815' width='1' height='13' fill='#264478'/><rect x='1333' y='803' width='1' height='12' fill='#9E480E'/><rect x='1337' y='877' width='1' height='13' fill='#4472C4'/><rect x='1337' y='865' width='1' height='12' fill='#A5A5A5'/><rect x='1337' y='852' width='1' height='13' fill='#FFC000'/><rect x='1337' y='840' width='1' height='12' fill='#5B9BD5'/><rect x='1337' y='828' width='1' height='12' fill='#70AD47'/><rect x='1337' y='815' width='1' height='13' fill='#264478'/><rect x='1337' y='803' width='1' height='12' fill='#9E480E'/><rect x='1340' y='877' width='1' height='13' fill='#4472C4'/><rect x='1340' y='865' width='1' height='12' fill='#A5A5A5'/><rect x='1340' y='852' width='1' height='13' fill='#FFC000'/><rect x='1340' y='840' width='1' height='12' fill='#5B9BD5'/><rect x='1340' y='828' width='1' height='12' fill='#70AD47'/><rect x='1340' y='815' width='1' height='13' fill='#264478'/><rect x='1340' y='803' width='1' height='12' fill='#9E480E'/><rect x='1344' y='877' width='1' height='13' fill='#4472C4'/><rect x='1344' y='865' width='1' height='12' fill='#A5A5A5'/><rect x='1344' y='852' width='1' height='13' fill='#FFC000'/><rect x='1344' y='840' width='1' height='12' fill='#5B9BD5'/><rect x='1344' y='828' width='1' height='12' fill='#70AD47'/><rect x='1344' y='815' width='1' height='13' fill='#264478'/><rect x='1344' y='803' width='1' height='12' fill='#9E480E'/><rect x='1347' y='877' width='1' height='13' fill='#4472C4'/><rect x='1347' y='865' width='1' height='12' fill='#A5A5A5'/><rect x='1347' y='852' width='1' height='13' fill='#FFC000'/><rect x='1347' y='840' width='1' height='12' fill='#5B9BD5'/><rect x='1347' y='828' width='1' height='12' fill='#70AD47'/><rect x='1347' y='815' width='1' height='13' fill='#264478'/><rect x='1347' y='803' width='1' height='12' fill='#9E480E'/><rect x='1351' y='877' width='1' height='13' fill='#4472C4'/><rect x='1351' y='865' width='1' height='12' fill='#A5A5A5'/><rect x='1351' y='852' width='1' height='13' fill='#FFC000'/><rect x='1351' y='840' width='1' height='12' fill='#5B9BD5'/><rect x='1351' y='828' width='1' height='12' fill='#70AD47'/><rect x='1351' y='815' width='1' height='13' fill='#264478'/><rect x='1351' y='803' width='1' height='12' fill='#9E480E'/><rect x='1354' y='877' width='1' height='13' fill='#4472C4'/><rect x='1354' y='865' width='1' height='12' fill='#A5A5A5'/><rect x='1354' y='852' width='1' height='13' fill='#FFC000'/><rect x='1354' y='840' width='1' height='12' fill='#5B9BD5'/><rect x='1354' y='828' width='1' height='12' fill='#70AD47'/><rect x='1354' y='815' width='1' height='13' fill='#264478'/><rect x='1354' y='803' width='1' height='12' fill='#9E480E'/><rect x='1358' y='877' width='1' height='13' fill='#4472C4'/><rect x='1358' y='865' width='1' height='12' fill='#A5A5A5'/><rect x='1358' y='852' width='1' height='13' fill='#FFC000'/><rect x='1358' y='840' width='1' height='12' fill='#5B9BD5'/><rect x='1358' y='828' width='1' height='12' fill='#70AD47'/><rect x='1358' y='815' width='1' height='13' fill='#264478'/><rect x='1358' y='803' width='1' height='12' fill='#9E480E'/><rect x='1361' y='877' width='1' height='13' fill='#4472C4'/><rect x='1361' y='865' width='1' height='12' fill='#A5A5A5'/><rect x='1361' y='852' width='1' height='13' fill='#FFC000'/><rect x='1361' y='840' width='1' height='12' fill='#5B9BD5'/><rect x='1361' y='828' width='1' height='12' fill='#70AD47'/><rect x='1361' y='815' width='1' height='13' fill='#264478'/><rect x='1361' y='803' width='1' height='12' fill='#9E480E'/><rect x='1365' y='877' width='1' height='13' fill='#4472C4'/><rect x='1365' y='865' width='1' height='12' fill='#A5A5A5'/><rect x='1365' y='852' width='1' height='13' fill='#FFC000'/><rect x='1365' y='840' width='1' height='12' fill='#5B9BD5'/><rect x='1365' y='828' width='1' height='12' fill='#70AD47'/><rect x='1365' y='815' width='1' height='13' fill='#264478'/><rect x='1365' y='803' width='1' height='12' fill='#9E480E'/><rect x='1368' y='877' width='1' height='13' fill='#4472C4'/><rect x='1368' y='865' width='1' height='12' fill='#A5A5A5'/><rect x='1368' y='852' width='1' height='13' fill='#FFC000'/><rect x='1368' y='840' width='1' height='12' fill='#5B9BD5'/><rect x='1368' y='828' width='1' height='12' fill='#70AD47'/><rect x='1368' y='815' width='1' height='13' fill='#264478'/><rect x='1368' y='803' width='1' height='12' fill='#9E480E'/><rect x='1372' y='877' width='1' height='13' fill='#4472C4'/><rect x='1372' y='865' width='1' height='12' fill='#A5A5A5'/><rect x='1372' y='852' width='1' height='13' fill='#FFC000'/><rect x='1372' y='840' width='1' height='12' fill='#5B9BD5'/><rect x='1372' y='828' width='1' height='12' fill='#70AD47'/><rect x='1372' y='815' width='1' height='13' fill='#264478'/><rect x='1372' y='803' width='1' height='12' fill='#9E480E'/><rect x='1375' y='877' width='2' height='13' fill='#4472C4'/><rect x='1375' y='865' width='2' height='12' fill='#A5A5A5'/><rect x='1375' y='852' width='2' height='13' fill='#FFC000'/><rect x='1375' y='840' width='2' height='12' fill='#5B9BD5'/><rect x='1375' y='828' width='2' height='12' fill='#70AD47'/><rect x='1375' y='815' width='2' height='13' fill='#264478'/><rect x='1375' y='803' width='2' height='12' fill='#9E480E'/><rect x='1379' y='877' width='1' height='13' fill='#4472C4'/><rect x='1379' y='865' width='1' height='12' fill='#A5A5A5'/><rect x='1379' y='852' width='1' height='13' fill='#FFC000'/><rect x='1379' y='840' width='1' height='12' fill='#5B9BD5'/><rect x='1379' y='828' width='1' height='12' fill='#70AD47'/><rect x='1379' y='815' width='1' height='13' fill='#264478'/><rect x='1379' y='803' width='1' height='12' fill='#9E480E'/><rect x='1382' y='877' width='2' height='13' fill='#4472C4'/><rect x='1382' y='865' width='2' height='12' fill='#A5A5A5'/><rect x='1382' y='852' width='2' height='13' fill='#FFC000'/><rect x='1382' y='840' width='2' height='12' fill='#5B9BD5'/><rect x='1382' y='828' width='2' height='12' fill='#70AD47'/><rect x='1382' y='815' width='2' height='13' fill='#264478'/><rect x='1382' y='803' width='2' height='12' fill='#9E480E'/><rect x='1386' y='877' width='1' height='13' fill='#4472C4'/><rect x='1386' y='865' width='1' height='12' fill='#A5A5A5'/><rect x='1386' y='852' width='1' height='13' fill='#FFC000'/><rect x='1386' y='840' width='1' height='12' fill='#5B9BD5'/><rect x='1386' y='828' width='1' height='12' fill='#70AD47'/><rect x='1386' y='815' width='1' height='13' fill='#264478'/><rect x='1386' y='803' width='1' height='12' fill='#9E480E'/><rect x='1390' y='877' width='1' height='13' fill='#4472C4'/><rect x='1390' y='865' width='1' height='12' fill='#A5A5A5'/><rect x='1390' y='852' width='1' height='13' fill='#FFC000'/><rect x='1390' y='840' width='1' height='12' fill='#5B9BD5'/><rect x='1390' y='828' width='1' height='12' fill='#70AD47'/><rect x='1390' y='815' width='1' height='13' fill='#264478'/><rect x='1390' y='803' width='1' height='12' fill='#9E480E'/><rect x='1393' y='877' width='1' height='13' fill='#4472C4'/><rect x='1393' y='852' width='1' height='25' fill='#A5A5A5'/><rect x='1393' y='840' width='1' height='12' fill='#FFC000'/><rect x='1393' y='815' width='1' height='25' fill='#5B9BD5'/><rect x='1393' y='803' width='1' height='12' fill='#70AD47'/><rect x='1393' y='778' width='1' height='25' fill='#264478'/><rect x='1393' y='766' width='1' height='12' fill='#9E480E'/><rect x='1397' y='877' width='1' height='13' fill='#4472C4'/><rect x='1397' y='852' width='1' height='25' fill='#A5A5A5'/><rect x='1397' y='840' width='1' height='12' fill='#FFC000'/><rect x='1397' y='815' width='1' height='25' fill='#5B9BD5'/><rect x='1397' y='803' width='1' height='12' fill='#70AD47'/><rect x='1397' y='778' width='1' height='25' fill='#264478'/><rect x='1397' y='766' width='1' height='12' fill='#9E480E'/><rect x='1400' y='877' width='1' height='13' fill='#4472C4'/><rect x='1400' y='852' width='1' height='25' fill='#A5A5A5'/><rect x='1400' y='840' width='1' height='12' fill='#FFC000'/><rect x='1400' y='815' width='1' height='25' fill='#5B9BD5'/><rect x='1400' y='803' width='1' height='12' fill='#70AD47'/><rect x='1400' y='778' width='1' height='25' fill='#264478'/><rect x='1400' y='766' width='1' height='12' fill='#9E480E'/><rect x='1404' y='877' width='1' height='13' fill='#4472C4'/><rect x='1404' y='852' width='1' height='25' fill='#A5A5A5'/><rect x='1404' y='840' width='1' height='12' fill='#FFC000'/><rect x='1404' y='815' width='1' height='25' fill='#5B9BD5'/><rect x='1404' y='803' width='1' height='12' fill='#70AD47'/><rect x='1404' y='778' width='1' height='25' fill='#264478'/><rect x='1404' y='766' width='1' height='12' fill='#9E480E'/><rect x='1407' y='877' width='1' height='13' fill='#4472C4'/><rect x='1407' y='852' width='1' height='25' fill='#A5A5A5'/><rect x='1407' y='840' width='1' height='12' fill='#FFC000'/><rect x='1407' y='815' width='1' height='25' fill='#5B9BD5'/><rect x='1407' y='803' width='1' height='12' fill='#70AD47'/><rect x='1407' y='778' width='1' height='25' fill='#264478'/><rect x='1407' y='766' width='1' height='12' fill='#9E480E'/><rect x='1411' y='877' width='1' height='13' fill='#4472C4'/><rect x='1411' y='852' width='1' height='25' fill='#A5A5A5'/><rect x='1411' y='840' width='1' height='12' fill='#FFC000'/><rect x='1411' y='815' width='1' height='25' fill='#5B9BD5'/><rect x='1411' y='803' width='1' height='12' fill='#70AD47'/><rect x='1411' y='778' width='1' height='25' fill='#264478'/><rect x='1411' y='766' width='1' height='12' fill='#9E480E'/><rect x='1414' y='877' width='1' height='13' fill='#4472C4'/><rect x='1414' y='852' width='1' height='25' fill='#A5A5A5'/><rect x='1414' y='840' width='1' height='12' fill='#FFC000'/><rect x='1414' y='815' width='1' height='25' fill='#5B9BD5'/><rect x='1414' y='803' width='1' height='12' fill='#70AD47'/><rect x='1414' y='778' width='1' height='25' fill='#264478'/><rect x='1414' y='766' width='1' height='12' fill='#9E480E'/><rect x='1418' y='877' width='1' height='13' fill='#4472C4'/><rect x='1418' y='852' width='1' height='25' fill='#A5A5A5'/><rect x='1418' y='840' width='1' height='12' fill='#FFC000'/><rect x='1418' y='815' width='1' height='25' fill='#5B9BD5'/><rect x='1418' y='803' width='1' height='12' fill='#70AD47'/><rect x='1418' y='778' width='1' height='25' fill='#264478'/><rect x='1418' y='766' width='1' height='12' fill='#9E480E'/><rect x='1421' y='877' width='1' height='13' fill='#4472C4'/><rect x='1421' y='852' width='1' height='25' fill='#A5A5A5'/><rect x='1421' y='840' width='1' height='12' fill='#FFC000'/><rect x='1421' y='815' width='1' height='25' fill='#5B9BD5'/><rect x='1421' y='803' width='1' height='12' fill='#70AD47'/><rect x='1421' y='778' width='1' height='25' fill='#264478'/><rect x='1421' y='766' width='1' height='12' fill='#9E480E'/><rect x='1425' y='877' width='1' height='13' fill='#4472C4'/><rect x='1425' y='852' width='1' height='25' fill='#A5A5A5'/><rect x='1425' y='840' width='1' height='12' fill='#FFC000'/><rect x='1425' y='815' width='1' height='25' fill='#5B9BD5'/><rect x='1425' y='803' width='1' height='12' fill='#70AD47'/><rect x='1425' y='778' width='1' height='25' fill='#264478'/><rect x='1425' y='766' width='1' height='12' fill='#9E480E'/><rect x='1428' y='877' width='1' height='13' fill='#4472C4'/><rect x='1428' y='852' width='1' height='25' fill='#A5A5A5'/><rect x='1428' y='840' width='1' height='12' fill='#FFC000'/><rect x='1428' y='815' width='1' height='25' fill='#5B9BD5'/><rect x='1428' y='803' width='1' height='12' fill='#70AD47'/><rect x='1428' y='778' width='1' height='25' fill='#264478'/><rect x='1428' y='766' width='1' height='12' fill='#9E480E'/><rect x='1432' y='877' width='1' height='13' fill='#4472C4'/><rect x='1432' y='852' width='1' height='25' fill='#A5A5A5'/><rect x='1432' y='840' width='1' height='12' fill='#FFC000'/><rect x='1432' y='815' width='1' height='25' fill='#5B9BD5'/><rect x='1432' y='803' width='1' height='12' fill='#70AD47'/><rect x='1432' y='778' width='1' height='25' fill='#264478'/><rect x='1432' y='766' width='1' height='12' fill='#9E480E'/><rect x='1435' y='877' width='2' height='13' fill='#4472C4'/><rect x='1435' y='865' width='2' height='12' fill='#ED7D31'/><rect x='1435' y='840' width='2' height='25' fill='#A5A5A5'/><rect x='1435' y='815' width='2' height='25' fill='#FFC000'/><rect x='1435' y='790' width='2' height='25' fill='#5B9BD5'/><rect x='1435' y='766' width='2' height='24' fill='#70AD47'/><rect x='1435' y='741' width='2' height='25' fill='#264478'/><rect x='1435' y='716' width='2' height='25' fill='#9E480E'/><rect x='1439' y='877' width='1' height='13' fill='#4472C4'/><rect x='1439' y='865' width='1' height='12' fill='#ED7D31'/><rect x='1439' y='840' width='1' height='25' fill='#A5A5A5'/><rect x='1439' y='815' width='1' height='25' fill='#FFC000'/><rect x='1439' y='790' width='1' height='25' fill='#5B9BD5'/><rect x='1439' y='766' width='1' height='24' fill='#70AD47'/><rect x='1439' y='741' width='1' height='25' fill='#264478'/><rect x='1439' y='716' width='1' height='25' fill='#9E480E'/><rect x='1443' y='877' width='1' height='13' fill='#4472C4'/><rect x='1443' y='865' width='1' height='12' fill='#ED7D31'/><rect x='1443' y='840' width='1' height='25' fill='#A5A5A5'/><rect x='1443' y='815' width='1' height='25' fill='#FFC000'/><rect x='1443' y='790' width='1' height='25' fill='#5B9BD5'/><rect x='1443' y='766' width='1' height='24' fill='#70AD47'/><rect x='1443' y='741' width='1' height='25' fill='#264478'/><rect x='1443' y='716' width='1' height='25' fill='#9E480E'/><rect x='1446' y='877' width='1' height='13' fill='#4472C4'/><rect x='1446' y='865' width='1' height='12' fill='#ED7D31'/><rect x='1446' y='840' width='1' height='25' fill='#A5A5A5'/><rect x='1446' y='815' width='1' height='25' fill='#FFC000'/><rect x='1446' y='790' width='1' height='25' fill='#5B9BD5'/><rect x='1446' y='766' width='1' height='24' fill='#70AD47'/><rect x='1446' y='741' width='1' height='25' fill='#264478'/><rect x='1446' y='716' width='1' height='25' fill='#9E480E'/><rect x='1450' y='877' width='1' height='13' fill='#4472C4'/><rect x='1450' y='865' width='1' height='12' fill='#ED7D31'/><rect x='1450' y='840' width='1' height='25' fill='#A5A5A5'/><rect x='1450' y='815' width='1' height='25' fill='#FFC000'/><rect x='1450' y='790' width='1' height='25' fill='#5B9BD5'/><rect x='1450' y='766' width='1' height='24' fill='#70AD47'/><rect x='1450' y='741' width='1' height='25' fill='#264478'/><rect x='1450' y='716' width='1' height='25' fill='#9E480E'/><rect x='1453' y='877' width='1' height='13' fill='#4472C4'/><rect x='1453' y='865' width='1' height='12' fill='#ED7D31'/><rect x='1453' y='840' width='1' height='25' fill='#A5A5A5'/><rect x='1453' y='815' width='1' height='25' fill='#FFC000'/><rect x='1453' y='790' width='1' height='25' fill='#5B9BD5'/><rect x='1453' y='766' width='1' height='24' fill='#70AD47'/><rect x='1453' y='741' width='1' height='25' fill='#264478'/><rect x='1453' y='716' width='1' height='25' fill='#9E480E'/><rect x='1457' y='877' width='1' height='13' fill='#4472C4'/><rect x='1457' y='865' width='1' height='12' fill='#ED7D31'/><rect x='1457' y='840' width='1' height='25' fill='#A5A5A5'/><rect x='1457' y='815' width='1' height='25' fill='#FFC000'/><rect x='1457' y='790' width='1' height='25' fill='#5B9BD5'/><rect x='1457' y='766' width='1' height='24' fill='#70AD47'/><rect x='1457' y='741' width='1' height='25' fill='#264478'/><rect x='1457' y='716' width='1' height='25' fill='#9E480E'/><rect x='1460' y='877' width='1' height='13' fill='#4472C4'/><rect x='1460' y='865' width='1' height='12' fill='#ED7D31'/><rect x='1460' y='840' width='1' height='25' fill='#A5A5A5'/><rect x='1460' y='815' width='1' height='25' fill='#FFC000'/><rect x='1460' y='790' width='1' height='25' fill='#5B9BD5'/><rect x='1460' y='766' width='1' height='24' fill='#70AD47'/><rect x='1460' y='741' width='1' height='25' fill='#264478'/><rect x='1460' y='716' width='1' height='25' fill='#9E480E'/><rect x='1464' y='877' width='1' height='13' fill='#4472C4'/><rect x='1464' y='865' width='1' height='12' fill='#ED7D31'/><rect x='1464' y='840' width='1' height='25' fill='#A5A5A5'/><rect x='1464' y='815' width='1' height='25' fill='#FFC000'/><rect x='1464' y='790' width='1' height='25' fill='#5B9BD5'/><rect x='1464' y='766' width='1' height='24' fill='#70AD47'/><rect x='1464' y='741' width='1' height='25' fill='#264478'/><rect x='1464' y='716' width='1' height='25' fill='#9E480E'/><rect x='1467' y='877' width='1' height='13' fill='#4472C4'/><rect x='1467' y='865' width='1' height='12' fill='#ED7D31'/><rect x='1467' y='840' width='1' height='25' fill='#A5A5A5'/><rect x='1467' y='815' width='1' height='25' fill='#FFC000'/><rect x='1467' y='790' width='1' height='25' fill='#5B9BD5'/><rect x='1467' y='766' width='1' height='24' fill='#70AD47'/><rect x='1467' y='741' width='1' height='25' fill='#264478'/><rect x='1467' y='716' width='1' height='25' fill='#9E480E'/><rect x='1471' y='877' width='1' height='13' fill='#4472C4'/><rect x='1471' y='865' width='1' height='12' fill='#ED7D31'/><rect x='1471' y='840' width='1' height='25' fill='#A5A5A5'/><rect x='1471' y='815' width='1' height='25' fill='#FFC000'/><rect x='1471' y='790' width='1' height='25' fill='#5B9BD5'/><rect x='1471' y='766' width='1' height='24' fill='#70AD47'/><rect x='1471' y='741' width='1' height='25' fill='#264478'/><rect x='1471' y='716' width='1' height='25' fill='#9E480E'/><rect x='1474' y='877' width='1' height='13' fill='#4472C4'/><rect x='1474' y='865' width='1' height='12' fill='#ED7D31'/><rect x='1474' y='840' width='1' height='25' fill='#A5A5A5'/><rect x='1474' y='815' width='1' height='25' fill='#FFC000'/><rect x='1474' y='790' width='1' height='25' fill='#5B9BD5'/><rect x='1474' y='766' width='1' height='24' fill='#70AD47'/><rect x='1474' y='741' width='1' height='25' fill='#264478'/><rect x='1474' y='716' width='1' height='25' fill='#9E480E'/><rect x='1478' y='877' width='1' height='13' fill='#4472C4'/><rect x='1478' y='865' width='1' height='12' fill='#ED7D31'/><rect x='1478' y='840' width='1' height='25' fill='#A5A5A5'/><rect x='1478' y='815' width='1' height='25' fill='#FFC000'/><rect x='1478' y='790' width='1' height='25' fill='#5B9BD5'/><rect x='1478' y='766' width='1' height='24' fill='#70AD47'/><rect x='1478' y='741' width='1' height='25' fill='#264478'/><rect x='1478' y='716' width='1' height='25' fill='#9E480E'/><rect x='1481' y='877' width='1' height='13' fill='#4472C4'/><rect x='1481' y='865' width='1' height='12' fill='#ED7D31'/><rect x='1481' y='840' width='1' height='25' fill='#A5A5A5'/><rect x='1481' y='815' width='1' height='25' fill='#FFC000'/><rect x='1481' y='790' width='1' height='25' fill='#5B9BD5'/><rect x='1481' y='766' width='1' height='24' fill='#70AD47'/><rect x='1481' y='741' width='1' height='25' fill='#264478'/><rect x='1481' y='716' width='1' height='25' fill='#9E480E'/><rect x='1485' y='877' width='1' height='13' fill='#4472C4'/><rect x='1485' y='865' width='1' height='12' fill='#ED7D31'/><rect x='1485' y='840' width='1' height='25' fill='#A5A5A5'/><rect x='1485' y='815' width='1' height='25' fill='#FFC000'/><rect x='1485' y='790' width='1' height='25' fill='#5B9BD5'/><rect x='1485' y='766' width='1' height='24' fill='#70AD47'/><rect x='1485' y='741' width='1' height='25' fill='#264478'/><rect x='1485' y='716' width='1' height='25' fill='#9E480E'/><rect x='1488' y='877' width='2' height='13' fill='#4472C4'/><rect x='1488' y='865' width='2' height='12' fill='#ED7D31'/><rect x='1488' y='840' width='2' height='25' fill='#A5A5A5'/><rect x='1488' y='815' width='2' height='25' fill='#FFC000'/><rect x='1488' y='790' width='2' height='25' fill='#5B9BD5'/><rect x='1488' y='766' width='2' height='24' fill='#70AD47'/><rect x='1488' y='741' width='2' height='25' fill='#264478'/><rect x='1488' y='716' width='2' height='25' fill='#9E480E'/><rect x='1492' y='877' width='1' height='13' fill='#4472C4'/><rect x='1492' y='865' width='1' height='12' fill='#ED7D31'/><rect x='1492' y='840' width='1' height='25' fill='#A5A5A5'/><rect x='1492' y='815' width='1' height='25' fill='#FFC000'/><rect x='1492' y='790' width='1' height='25' fill='#5B9BD5'/><rect x='1492' y='766' width='1' height='24' fill='#70AD47'/><rect x='1492' y='741' width='1' height='25' fill='#264478'/><rect x='1492' y='716' width='1' height='25' fill='#9E480E'/><rect x='1495' y='877' width='2' height='13' fill='#4472C4'/><rect x='1495' y='865' width='2' height='12' fill='#ED7D31'/><rect x='1495' y='840' width='2' height='25' fill='#A5A5A5'/><rect x='1495' y='815' width='2' height='25' fill='#FFC000'/><rect x='1495' y='790' width='2' height='25' fill='#5B9BD5'/><rect x='1495' y='766' width='2' height='24' fill='#70AD47'/><rect x='1495' y='741' width='2' height='25' fill='#264478'/><rect x='1495' y='716' width='2' height='25' fill='#9E480E'/><rect x='1499' y='877' width='1' height='13' fill='#4472C4'/><rect x='1499' y='865' width='1' height='12' fill='#ED7D31'/><rect x='1499' y='840' width='1' height='25' fill='#A5A5A5'/><rect x='1499' y='815' width='1' height='25' fill='#FFC000'/><rect x='1499' y='790' width='1' height='25' fill='#5B9BD5'/><rect x='1499' y='766' width='1' height='24' fill='#70AD47'/><rect x='1499' y='741' width='1' height='25' fill='#264478'/><rect x='1499' y='716' width='1' height='25' fill='#9E480E'/><rect x='1503' y='877' width='1' height='13' fill='#4472C4'/><rect x='1503' y='865' width='1' height='12' fill='#ED7D31'/><rect x='1503' y='840' width='1' height='25' fill='#A5A5A5'/><rect x='1503' y='815' width='1' height='25' fill='#FFC000'/><rect x='1503' y='790' width='1' height='25' fill='#5B9BD5'/><rect x='1503' y='766' width='1' height='24' fill='#70AD47'/><rect x='1503' y='741' width='1' height='25' fill='#264478'/><rect x='1503' y='716' width='1' height='25' fill='#9E480E'/><rect x='1506' y='877' width='1' height='13' fill='#4472C4'/><rect x='1506' y='865' width='1' height='12' fill='#ED7D31'/><rect x='1506' y='840' width='1' height='25' fill='#A5A5A5'/><rect x='1506' y='815' width='1' height='25' fill='#FFC000'/><rect x='1506' y='790' width='1' height='25' fill='#5B9BD5'/><rect x='1506' y='766' width='1' height='24' fill='#70AD47'/><rect x='1506' y='741' width='1' height='25' fill='#264478'/><rect x='1506' y='716' width='1' height='25' fill='#9E480E'/><rect x='1510' y='877' width='1' height='13' fill='#4472C4'/><rect x='1510' y='865' width='1' height='12' fill='#ED7D31'/><rect x='1510' y='840' width='1' height='25' fill='#A5A5A5'/><rect x='1510' y='815' width='1' height='25' fill='#FFC000'/><rect x='1510' y='790' width='1' height='25' fill='#5B9BD5'/><rect x='1510' y='766' width='1' height='24' fill='#70AD47'/><rect x='1510' y='741' width='1' height='25' fill='#264478'/><rect x='1510' y='716' width='1' height='25' fill='#9E480E'/><rect x='1513' y='877' width='1' height='13' fill='#4472C4'/><rect x='1513' y='865' width='1' height='12' fill='#ED7D31'/><rect x='1513' y='840' width='1' height='25' fill='#A5A5A5'/><rect x='1513' y='815' width='1' height='25' fill='#FFC000'/><rect x='1513' y='790' width='1' height='25' fill='#5B9BD5'/><rect x='1513' y='766' width='1' height='24' fill='#70AD47'/><rect x='1513' y='741' width='1' height='25' fill='#264478'/><rect x='1513' y='716' width='1' height='25' fill='#9E480E'/><rect x='1517' y='877' width='1' height='13' fill='#4472C4'/><rect x='1517' y='865' width='1' height='12' fill='#ED7D31'/><rect x='1517' y='840' width='1' height='25' fill='#A5A5A5'/><rect x='1517' y='815' width='1' height='25' fill='#FFC000'/><rect x='1517' y='790' width='1' height='25' fill='#5B9BD5'/><rect x='1517' y='766' width='1' height='24' fill='#70AD47'/><rect x='1517' y='741' width='1' height='25' fill='#264478'/><rect x='1517' y='716' width='1' height='25' fill='#9E480E'/></svg><div class=t style='top:94.85px;font-size:19px;color:#fff;font-weight:700;left:141.70px;'><span style='display:inline-block;transform:scaleX(0.895);transform-origin:left;'>Expenses</span></div><div class=t style='top:96.60px;font-size:16px;color:#fff;font-weight:700;left:543.80px;'><span style='display:inline-block;transform:scaleX(0.890);transform-origin:left;'>Baseline</span></div><div class=t style='top:86.34px;font-size:16.3px;color:#fff;font-weight:700;left:1538.70px;'><span style='display:inline-block;transform:scaleX(0.886);transform-origin:left;'>Period</span></div><div class=t style='top:108.34px;font-size:16.3px;color:#fff;font-weight:700;left:1538.70px;'><span style='display:inline-block;transform:scaleX(0.958);transform-origin:left;'>Month</span></div><div class=t style='top:86.34px;font-size:16.3px;color:#fff;font-weight:700;left:1374.50px;width:600px;text-align:center;'>1</div><div class=t style='top:86.34px;font-size:16.3px;color:#fff;font-weight:700;left:1467.40px;width:600px;text-align:center;'>2</div><div class=t style='top:86.34px;font-size:16.3px;color:#fff;font-weight:700;left:1560.40px;width:600px;text-align:center;'>3</div><div class=t style='top:108.34px;font-size:16.3px;color:#fff;font-weight:700;left:1651.00px;'><span style='display:inline-block;transform:scaleX(0.886);transform-origin:left;'>Jan-25</span></div><div class=t style='top:108.34px;font-size:16.3px;color:#fff;font-weight:700;left:1743.90px;'><span style='display:inline-block;transform:scaleX(0.907);transform-origin:left;'>Feb-25</span></div><div class=t style='top:108.34px;font-size:16.3px;color:#fff;font-weight:700;left:1834.40px;'><span style='display:inline-block;transform:scaleX(0.973);transform-origin:left;'>Mar-25</span></div><div class=t style='top:204.12px;font-size:15.5px;color:#fff;font-weight:700;left:93.00px;'><span style='display:inline-block;transform:scaleX(0.986);transform-origin:left;'>10</span></div><div class=t style='top:203.92px;font-size:15.5px;color:#000;font-weight:700;left:141.40px;'><span style='display:inline-block;transform:scaleX(0.907);transform-origin:left;'>Payroll Cost</span></div><div class=t style='top:255.12px;font-size:15.5px;color:#000;font-weight:700;left:141.50px;'><span style='display:inline-block;transform:scaleX(0.933);transform-origin:left;'>MONTHLY AVERAGE COMPENSATION</span></div><div class=t style='top:277.12px;font-size:15.5px;color:#000;font-weight:700;left:429.80px;'><span style='display:inline-block;transform:scaleX(0.972);transform-origin:left;'>Start Date</span></div><div class=t style='top:277.12px;font-size:15.5px;color:#000;font-weight:700;left:528.60px;'><span style='display:inline-block;transform:scaleX(0.924);transform-origin:left;'>Gr. Salary</span></div><div class=t style='top:277.12px;font-size:15.5px;color:#000;font-weight:700;left:608.00px;'><span style='display:inline-block;transform:scaleX(0.963);transform-origin:left;'>Taxes/Benefits %</span></div><div class=t style='top:277.12px;font-size:15.5px;color:#000;font-weight:700;left:775.40px;'><span style='display:inline-block;transform:scaleX(0.916);transform-origin:left;'>Cost Type</span></div><div class=t style='top:277.32px;font-size:15.5px;color:#000;font-weight:700;left:1359.00px;'><span style='display:inline-block;transform:scaleX(0.930);transform-origin:left;'>Sparkline Chart</span></div><div class=t style='top:304.72px;font-size:15.5px;color:#000;font-weight:700;left:141.10px;'><span style='display:inline-block;transform:scaleX(0.926);transform-origin:left;'>All Employees</span></div><div class=t style='top:304.43px;font-size:15.5px;color:#000;font-weight:700;left:1566.80px;'><span style='display:inline-block;transform:scaleX(0.877);transform-origin:left;'>USD</span></div><div class=t style='top:301.32px;font-size:15.5px;color:#000;font-weight:700;right:204.70px;text-align:right;'><span style='display:inline-block;transform:scaleX(1.008);transform-origin:right;'>4,286</span></div><div class=t style='top:301.32px;font-size:15.5px;color:#000;font-weight:700;right:111.80px;text-align:right;'><span style='display:inline-block;transform:scaleX(1.008);transform-origin:right;'>4,286</span></div><div class=t style='top:301.32px;font-size:15.5px;color:#000;font-weight:700;right:18.70px;text-align:right;'><span style='display:inline-block;transform:scaleX(1.008);transform-origin:right;'>4,286</span></div><div class=t style='top:326.97px;font-size:15.8px;color:#0e40d2;font-weight:700;left:141.40px;'><span style='display:inline-block;transform:scaleX(0.910);transform-origin:left;'>Founders / Execs</span></div><div class=t style='top:326.97px;font-size:15.8px;color:#0e40d2;font-weight:700;left:165.75px;width:600px;text-align:center;'><span style='display:inline-block;transform:scaleX(0.909);transform-origin:center;'>Jan-25</span></div><div class=t style='top:326.97px;font-size:15.8px;color:#0e40d2;font-weight:700;right:1326.20px;text-align:right;'><span style='display:inline-block;transform:scaleX(0.989);transform-origin:right;'>5,000</span></div><div class=t style='top:326.97px;font-size:15.8px;color:#0e40d2;font-weight:700;left:369.25px;width:600px;text-align:center;'><span style='display:inline-block;transform:scaleX(0.933);transform-origin:center;'>25%</span></div><div class=t style='top:326.97px;font-size:15.8px;color:#0e40d2;font-weight:700;left:509.50px;width:600px;text-align:center;'><span style='display:inline-block;transform:scaleX(0.858);transform-origin:center;'>OpEx</span></div><div class=t style='top:326.97px;font-size:15.8px;color:#000;left:1281.80px;width:600px;text-align:center;'><span style='display:inline-block;transform:scaleX(0.833);transform-origin:center;'>USD</span></div><div class=t style='top:326.97px;font-size:15.8px;color:#000;right:204.70px;text-align:right;'><span style='display:inline-block;transform:scaleX(0.989);transform-origin:right;'>6,250</span></div><div class=t style='top:326.97px;font-size:15.8px;color:#000;right:111.80px;text-align:right;'><span style='display:inline-block;transform:scaleX(0.989);transform-origin:right;'>6,250</span></div><div class=t style='top:326.97px;font-size:15.8px;color:#000;right:18.70px;text-align:right;'><span style='display:inline-block;transform:scaleX(0.989);transform-origin:right;'>6,250</span></div><div class=t style='top:349.97px;font-size:15.8px;color:#0e40d2;font-weight:700;left:141.40px;'><span style='display:inline-block;transform:scaleX(0.974);transform-origin:left;'>Management</span></div><div class=t style='top:349.97px;font-size:15.8px;color:#0e40d2;font-weight:700;left:165.75px;width:600px;text-align:center;'><span style='display:inline-block;transform:scaleX(0.909);transform-origin:center;'>Jan-25</span></div><div class=t style='top:349.97px;font-size:15.8px;color:#0e40d2;font-weight:700;right:1326.20px;text-align:right;'><span style='display:inline-block;transform:scaleX(0.989);transform-origin:right;'>4,000</span></div><div class=t style='top:349.97px;font-size:15.8px;color:#0e40d2;font-weight:700;left:369.25px;width:600px;text-align:center;'><span style='display:inline-block;transform:scaleX(0.933);transform-origin:center;'>25%</span></div><div class=t style='top:349.97px;font-size:15.8px;color:#0e40d2;font-weight:700;left:509.50px;width:600px;text-align:center;'><span style='display:inline-block;transform:scaleX(0.858);transform-origin:center;'>OpEx</span></div><div class=t style='top:349.97px;font-size:15.8px;color:#000;left:1281.80px;width:600px;text-align:center;'><span style='display:inline-block;transform:scaleX(0.833);transform-origin:center;'>USD</span></div><div class=t style='top:349.97px;font-size:15.8px;color:#000;right:204.70px;text-align:right;'><span style='display:inline-block;transform:scaleX(0.989);transform-origin:right;'>5,000</span></div><div class=t style='top:349.97px;font-size:15.8px;color:#000;right:111.80px;text-align:right;'><span style='display:inline-block;transform:scaleX(0.989);transform-origin:right;'>5,000</span></div><div class=t style='top:349.97px;font-size:15.8px;color:#000;right:18.70px;text-align:right;'><span style='display:inline-block;transform:scaleX(0.989);transform-origin:right;'>5,000</span></div><div class=t style='top:372.97px;font-size:15.8px;color:#0e40d2;font-weight:700;left:141.40px;'><span style='display:inline-block;transform:scaleX(0.903);transform-origin:left;'>Engineering</span></div><div class=t style='top:372.97px;font-size:15.8px;color:#0e40d2;font-weight:700;left:165.75px;width:600px;text-align:center;'><span style='display:inline-block;transform:scaleX(0.909);transform-origin:center;'>Jan-25</span></div><div class=t style='top:372.97px;font-size:15.8px;color:#0e40d2;font-weight:700;right:1326.20px;text-align:right;'><span style='display:inline-block;transform:scaleX(0.989);transform-origin:right;'>4,000</span></div><div class=t style='top:372.97px;font-size:15.8px;color:#0e40d2;font-weight:700;left:369.25px;width:600px;text-align:center;'><span style='display:inline-block;transform:scaleX(0.933);transform-origin:center;'>25%</span></div><div class=t style='top:372.97px;font-size:15.8px;color:#0e40d2;font-weight:700;left:509.50px;width:600px;text-align:center;'><span style='display:inline-block;transform:scaleX(0.858);transform-origin:center;'>OpEx</span></div><div class=t style='top:372.97px;font-size:15.8px;color:#000;left:1281.80px;width:600px;text-align:center;'><span style='display:inline-block;transform:scaleX(0.833);transform-origin:center;'>USD</span></div><div class=t style='top:372.97px;font-size:15.8px;color:#000;right:204.70px;text-align:right;'><span style='display:inline-block;transform:scaleX(0.989);transform-origin:right;'>5,000</span></div><div class=t style='top:372.97px;font-size:15.8px;color:#000;right:111.80px;text-align:right;'><span style='display:inline-block;transform:scaleX(0.989);transform-origin:right;'>5,000</span></div><div class=t style='top:372.97px;font-size:15.8px;color:#000;right:18.70px;text-align:right;'><span style='display:inline-block;transform:scaleX(0.989);transform-origin:right;'>5,000</span></div><div class=t style='top:395.97px;font-size:15.8px;color:#0e40d2;font-weight:700;left:141.40px;'><span style='display:inline-block;transform:scaleX(0.922);transform-origin:left;'>Product &amp; Design</span></div><div class=t style='top:395.97px;font-size:15.8px;color:#0e40d2;font-weight:700;left:165.75px;width:600px;text-align:center;'><span style='display:inline-block;transform:scaleX(0.909);transform-origin:center;'>Jan-25</span></div><div class=t style='top:395.97px;font-size:15.8px;color:#0e40d2;font-weight:700;right:1326.20px;text-align:right;'><span style='display:inline-block;transform:scaleX(0.989);transform-origin:right;'>3,000</span></div><div class=t style='top:395.97px;font-size:15.8px;color:#0e40d2;font-weight:700;left:369.25px;width:600px;text-align:center;'><span style='display:inline-block;transform:scaleX(0.933);transform-origin:center;'>25%</span></div><div class=t style='top:395.97px;font-size:15.8px;color:#0e40d2;font-weight:700;left:509.50px;width:600px;text-align:center;'><span style='display:inline-block;transform:scaleX(0.858);transform-origin:center;'>OpEx</span></div><div class=t style='top:395.97px;font-size:15.8px;color:#000;left:1281.80px;width:600px;text-align:center;'><span style='display:inline-block;transform:scaleX(0.833);transform-origin:center;'>USD</span></div><div class=t style='top:395.97px;font-size:15.8px;color:#000;right:204.70px;text-align:right;'><span style='display:inline-block;transform:scaleX(0.989);transform-origin:right;'>3,750</span></div><div class=t style='top:395.97px;font-size:15.8px;color:#000;right:111.80px;text-align:right;'><span style='display:inline-block;transform:scaleX(0.989);transform-origin:right;'>3,750</span></div><div class=t style='top:395.97px;font-size:15.8px;color:#000;right:18.70px;text-align:right;'><span style='display:inline-block;transform:scaleX(0.989);transform-origin:right;'>3,750</span></div><div class=t style='top:418.97px;font-size:15.8px;color:#0e40d2;font-weight:700;left:141.40px;'><span style='display:inline-block;transform:scaleX(0.968);transform-origin:left;'>Marketing</span></div><div class=t style='top:418.97px;font-size:15.8px;color:#0e40d2;font-weight:700;left:165.75px;width:600px;text-align:center;'><span style='display:inline-block;transform:scaleX(0.909);transform-origin:center;'>Jan-25</span></div><div class=t style='top:418.97px;font-size:15.8px;color:#0e40d2;font-weight:700;right:1326.20px;text-align:right;'><span style='display:inline-block;transform:scaleX(0.989);transform-origin:right;'>3,000</span></div><div class=t style='top:418.97px;font-size:15.8px;color:#0e40d2;font-weight:700;left:369.25px;width:600px;text-align:center;'><span style='display:inline-block;transform:scaleX(0.933);transform-origin:center;'>25%</span></div><div class=t style='top:418.97px;font-size:15.8px;color:#0e40d2;font-weight:700;left:509.50px;width:600px;text-align:center;'><span style='display:inline-block;transform:scaleX(0.858);transform-origin:center;'>OpEx</span></div><div class=t style='top:418.97px;font-size:15.8px;color:#000;left:1281.80px;width:600px;text-align:center;'><span style='display:inline-block;transform:scaleX(0.833);transform-origin:center;'>USD</span></div><div class=t style='top:418.97px;font-size:15.8px;color:#000;right:204.70px;text-align:right;'><span style='display:inline-block;transform:scaleX(0.989);transform-origin:right;'>3,750</span></div><div class=t style='top:418.97px;font-size:15.8px;color:#000;right:111.80px;text-align:right;'><span style='display:inline-block;transform:scaleX(0.989);transform-origin:right;'>3,750</span></div><div class=t style='top:418.97px;font-size:15.8px;color:#000;right:18.70px;text-align:right;'><span style='display:inline-block;transform:scaleX(0.989);transform-origin:right;'>3,750</span></div><div class=t style='top:441.97px;font-size:15.8px;color:#0e40d2;font-weight:700;left:141.40px;'><span style='display:inline-block;transform:scaleX(0.924);transform-origin:left;'>Customer Support</span></div><div class=t style='top:441.97px;font-size:15.8px;color:#0e40d2;font-weight:700;left:165.75px;width:600px;text-align:center;'><span style='display:inline-block;transform:scaleX(0.909);transform-origin:center;'>Jan-25</span></div><div class=t style='top:441.97px;font-size:15.8px;color:#0e40d2;font-weight:700;right:1326.20px;text-align:right;'><span style='display:inline-block;transform:scaleX(0.989);transform-origin:right;'>3,000</span></div><div class=t style='top:441.97px;font-size:15.8px;color:#0e40d2;font-weight:700;left:369.25px;width:600px;text-align:center;'><span style='display:inline-block;transform:scaleX(0.933);transform-origin:center;'>25%</span></div><div class=t style='top:441.97px;font-size:15.8px;color:#0e40d2;font-weight:700;left:509.50px;width:600px;text-align:center;'><span style='display:inline-block;transform:scaleX(0.849);transform-origin:center;'>COGS</span></div><div class=t style='top:441.97px;font-size:15.8px;color:#000;left:1281.80px;width:600px;text-align:center;'><span style='display:inline-block;transform:scaleX(0.833);transform-origin:center;'>USD</span></div><div class=t style='top:441.97px;font-size:15.8px;color:#000;right:204.70px;text-align:right;'><span style='display:inline-block;transform:scaleX(0.989);transform-origin:right;'>3,750</span></div><div class=t style='top:441.97px;font-size:15.8px;color:#000;right:111.80px;text-align:right;'><span style='display:inline-block;transform:scaleX(0.989);transform-origin:right;'>3,750</span></div><div class=t style='top:441.97px;font-size:15.8px;color:#000;right:18.70px;text-align:right;'><span style='display:inline-block;transform:scaleX(0.989);transform-origin:right;'>3,750</span></div><div class=t style='top:464.97px;font-size:15.8px;color:#0e40d2;font-weight:700;left:141.40px;'><span style='display:inline-block;transform:scaleX(0.879);transform-origin:left;'>Sales Reps</span></div><div class=t style='top:464.97px;font-size:15.8px;color:#0e40d2;font-weight:700;left:165.75px;width:600px;text-align:center;'><span style='display:inline-block;transform:scaleX(0.909);transform-origin:center;'>Jan-25</span></div><div class=t style='top:464.97px;font-size:15.8px;color:#0e40d2;font-weight:700;right:1326.20px;text-align:right;'><span style='display:inline-block;transform:scaleX(0.989);transform-origin:right;'>3,000</span></div><div class=t style='top:464.97px;font-size:15.8px;color:#0e40d2;font-weight:700;left:369.25px;width:600px;text-align:center;'><span style='display:inline-block;transform:scaleX(0.933);transform-origin:center;'>25%</span></div><div class=t style='top:464.97px;font-size:15.8px;color:#0e40d2;font-weight:700;left:509.50px;width:600px;text-align:center;'><span style='display:inline-block;transform:scaleX(0.858);transform-origin:center;'>OpEx</span></div><div class=t style='top:464.97px;font-size:15.8px;color:#000;left:1281.80px;width:600px;text-align:center;'><span style='display:inline-block;transform:scaleX(0.833);transform-origin:center;'>USD</span></div><div class=t style='top:464.97px;font-size:15.8px;color:#000;right:204.70px;text-align:right;'><span style='display:inline-block;transform:scaleX(0.989);transform-origin:right;'>3,750</span></div><div class=t style='top:464.97px;font-size:15.8px;color:#000;right:111.80px;text-align:right;'><span style='display:inline-block;transform:scaleX(0.989);transform-origin:right;'>3,750</span></div><div class=t style='top:464.97px;font-size:15.8px;color:#000;right:18.70px;text-align:right;'><span style='display:inline-block;transform:scaleX(0.989);transform-origin:right;'>3,750</span></div><div class=t style='top:487.97px;font-size:15.8px;color:#0e40d2;font-weight:700;left:141.40px;'><span style='display:inline-block;transform:scaleX(0.961);transform-origin:left;'>Operations / G&amp;A</span></div><div class=t style='top:487.97px;font-size:15.8px;color:#0e40d2;font-weight:700;left:165.75px;width:600px;text-align:center;'><span style='display:inline-block;transform:scaleX(0.909);transform-origin:center;'>Jan-25</span></div><div class=t style='top:487.97px;font-size:15.8px;color:#0e40d2;font-weight:700;right:1326.20px;text-align:right;'><span style='display:inline-block;transform:scaleX(0.989);transform-origin:right;'>3,000</span></div><div class=t style='top:487.97px;font-size:15.8px;color:#0e40d2;font-weight:700;left:369.25px;width:600px;text-align:center;'><span style='display:inline-block;transform:scaleX(0.933);transform-origin:center;'>25%</span></div><div class=t style='top:487.97px;font-size:15.8px;color:#0e40d2;font-weight:700;left:509.50px;width:600px;text-align:center;'><span style='display:inline-block;transform:scaleX(0.858);transform-origin:center;'>OpEx</span></div><div class=t style='top:487.97px;font-size:15.8px;color:#000;left:1281.80px;width:600px;text-align:center;'><span style='display:inline-block;transform:scaleX(0.833);transform-origin:center;'>USD</span></div><div class=t style='top:487.97px;font-size:15.8px;color:#000;right:204.70px;text-align:right;'><span style='display:inline-block;transform:scaleX(0.989);transform-origin:right;'>3,750</span></div><div class=t style='top:487.97px;font-size:15.8px;color:#000;right:111.80px;text-align:right;'><span style='display:inline-block;transform:scaleX(0.989);transform-origin:right;'>3,750</span></div><div class=t style='top:487.97px;font-size:15.8px;color:#000;right:18.70px;text-align:right;'><span style='display:inline-block;transform:scaleX(0.989);transform-origin:right;'>3,750</span></div><div class=t style='top:510.97px;font-size:15.8px;color:#0e40d2;font-weight:700;left:141.40px;'><span style='display:inline-block;transform:scaleX(0.947);transform-origin:left;'>Others 1</span></div><div class=t style='top:510.97px;font-size:15.8px;color:#0e40d2;font-weight:700;left:165.75px;width:600px;text-align:center;'><span style='display:inline-block;transform:scaleX(0.909);transform-origin:center;'>Jan-25</span></div><div class=t style='top:511.77px;font-size:15.8px;color:#0e40d2;font-weight:700;right:1343.60px;text-align:right;'><span style='display:inline-block;transform:scaleX(0.950);transform-origin:right;'>-</span></div><div class=t style='top:510.97px;font-size:15.8px;color:#0e40d2;font-weight:700;left:369.25px;width:600px;text-align:center;'><span style='display:inline-block;transform:scaleX(0.950);transform-origin:center;'>-</span></div><div class=t style='top:510.97px;font-size:15.8px;color:#0e40d2;font-weight:700;left:509.50px;width:600px;text-align:center;'><span style='display:inline-block;transform:scaleX(0.858);transform-origin:center;'>OpEx</span></div><div class=t style='top:510.97px;font-size:15.8px;color:#000;left:1281.80px;width:600px;text-align:center;'><span style='display:inline-block;transform:scaleX(0.833);transform-origin:center;'>USD</span></div><div class=t style='top:510.97px;font-size:15.8px;color:#000;right:204.30px;text-align:right;'><span style='display:inline-block;transform:scaleX(0.900);transform-origin:right;'>-</span></div><div class=t style='top:510.97px;font-size:15.8px;color:#000;right:111.40px;text-align:right;'><span style='display:inline-block;transform:scaleX(0.900);transform-origin:right;'>-</span></div><div class=t style='top:533.97px;font-size:15.8px;color:#0e40d2;font-weight:700;left:141.40px;'><span style='display:inline-block;transform:scaleX(0.947);transform-origin:left;'>Others 2</span></div><div class=t style='top:533.97px;font-size:15.8px;color:#0e40d2;font-weight:700;left:165.75px;width:600px;text-align:center;'><span style='display:inline-block;transform:scaleX(0.909);transform-origin:center;'>Jan-25</span></div><div class=t style='top:534.77px;font-size:15.8px;color:#0e40d2;font-weight:700;right:1343.60px;text-align:right;'><span style='display:inline-block;transform:scaleX(0.950);transform-origin:right;'>-</span></div><div class=t style='top:533.97px;font-size:15.8px;color:#0e40d2;font-weight:700;left:369.25px;width:600px;text-align:center;'><span style='display:inline-block;transform:scaleX(0.950);transform-origin:center;'>-</span></div><div class=t style='top:533.97px;font-size:15.8px;color:#0e40d2;font-weight:700;left:509.50px;width:600px;text-align:center;'><span style='display:inline-block;transform:scaleX(0.858);transform-origin:center;'>OpEx</span></div><div class=t style='top:533.97px;font-size:15.8px;color:#000;left:1281.80px;width:600px;text-align:center;'><span style='display:inline-block;transform:scaleX(0.833);transform-origin:center;'>USD</span></div><div class=t style='top:533.97px;font-size:15.8px;color:#000;right:204.30px;text-align:right;'><span style='display:inline-block;transform:scaleX(0.900);transform-origin:right;'>-</span></div><div class=t style='top:533.97px;font-size:15.8px;color:#000;right:111.40px;text-align:right;'><span style='display:inline-block;transform:scaleX(0.900);transform-origin:right;'>-</span></div><div class=t style='top:602.77px;font-size:15.8px;color:#000;font-weight:700;left:141.30px;'><span style='display:inline-block;transform:scaleX(0.890);transform-origin:left;'>NUMBER OF FULL TIME EMPLOYEES</span></div><div class=t style='top:650.57px;font-size:15.8px;color:#000;font-weight:700;left:141.10px;'><span style='display:inline-block;transform:scaleX(0.913);transform-origin:left;'>All Employees</span></div><div class=t style='top:650.77px;font-size:15.8px;color:#000;font-weight:700;left:1359.10px;'><span style='display:inline-block;transform:scaleX(0.911);transform-origin:left;'>Sparkline Chart</span></div><div class=t style='top:653.57px;font-size:15.8px;color:#000;font-weight:700;left:1281.10px;width:600px;text-align:center;'><span style='display:inline-block;transform:scaleX(0.932);transform-origin:center;'>#</span></div><div class=t style='top:650.77px;font-size:15.8px;color:#000;font-weight:700;right:204.20px;text-align:right;'><span style='display:inline-block;transform:scaleX(0.950);transform-origin:right;'>7</span></div><div class=t style='top:650.77px;font-size:15.8px;color:#000;font-weight:700;right:111.60px;text-align:right;'><span style='display:inline-block;transform:scaleX(0.950);transform-origin:right;'>7</span></div><div class=t style='top:675.97px;font-size:15.8px;color:#000;left:141.40px;'><span style='display:inline-block;transform:scaleX(0.941);transform-origin:left;'>Founders / Execs</span></div><div class=t style='top:676.67px;font-size:15.8px;color:#000;left:1281.10px;width:600px;text-align:center;'><span style='display:inline-block;transform:scaleX(0.932);transform-origin:center;'>#</span></div><div class=t style='top:675.97px;font-size:15.8px;color:#000;right:204.70px;text-align:right;'><span style='display:inline-block;transform:scaleX(0.929);transform-origin:right;'>1.0</span></div><div class=t style='top:675.97px;font-size:15.8px;color:#000;right:111.70px;text-align:right;'><span style='display:inline-block;transform:scaleX(0.929);transform-origin:right;'>1.0</span></div><div class=t style='top:675.97px;font-size:15.8px;color:#000;right:18.80px;text-align:right;'><span style='display:inline-block;transform:scaleX(0.929);transform-origin:right;'>1.0</span></div><div class=t style='top:698.97px;font-size:15.8px;color:#000;left:141.40px;'><span style='display:inline-block;transform:scaleX(0.994);transform-origin:left;'>Management</span></div><div class=t style='top:699.67px;font-size:15.8px;color:#000;left:1281.10px;width:600px;text-align:center;'><span style='display:inline-block;transform:scaleX(0.932);transform-origin:center;'>#</span></div><div class=t style='top:698.97px;font-size:15.8px;color:#000;right:204.30px;text-align:right;'><span style='display:inline-block;transform:scaleX(0.900);transform-origin:right;'>-</span></div><div class=t style='top:698.97px;font-size:15.8px;color:#000;right:111.40px;text-align:right;'><span style='display:inline-block;transform:scaleX(0.900);transform-origin:right;'>-</span></div><div class=t style='top:721.97px;font-size:15.8px;color:#000;left:141.40px;'><span style='display:inline-block;transform:scaleX(0.949);transform-origin:left;'>Engineering</span></div><div class=t style='top:722.67px;font-size:15.8px;color:#000;left:1281.10px;width:600px;text-align:center;'><span style='display:inline-block;transform:scaleX(0.932);transform-origin:center;'>#</span></div><div class=t style='top:721.97px;font-size:15.8px;color:#000;right:204.70px;text-align:right;'><span style='display:inline-block;transform:scaleX(0.929);transform-origin:right;'>1.0</span></div><div class=t style='top:721.97px;font-size:15.8px;color:#000;right:111.70px;text-align:right;'><span style='display:inline-block;transform:scaleX(0.929);transform-origin:right;'>1.0</span></div><div class=t style='top:721.97px;font-size:15.8px;color:#000;right:18.80px;text-align:right;'><span style='display:inline-block;transform:scaleX(0.929);transform-origin:right;'>1.0</span></div><div class=t style='top:744.97px;font-size:15.8px;color:#000;left:141.40px;'><span style='display:inline-block;transform:scaleX(0.974);transform-origin:left;'>Product &amp; Design</span></div><div class=t style='top:745.67px;font-size:15.8px;color:#000;left:1281.10px;width:600px;text-align:center;'><span style='display:inline-block;transform:scaleX(0.932);transform-origin:center;'>#</span></div><div class=t style='top:744.97px;font-size:15.8px;color:#000;right:204.70px;text-align:right;'><span style='display:inline-block;transform:scaleX(0.929);transform-origin:right;'>1.0</span></div><div class=t style='top:744.97px;font-size:15.8px;color:#000;right:111.70px;text-align:right;'><span style='display:inline-block;transform:scaleX(0.929);transform-origin:right;'>1.0</span></div><div class=t style='top:744.97px;font-size:15.8px;color:#000;right:18.80px;text-align:right;'><span style='display:inline-block;transform:scaleX(0.929);transform-origin:right;'>1.0</span></div><div class=t style='top:767.97px;font-size:15.8px;color:#000;left:141.40px;'><span style='display:inline-block;transform:scaleX(1.027);transform-origin:left;'>Marketing</span></div><div class=t style='top:768.67px;font-size:15.8px;color:#000;left:1281.10px;width:600px;text-align:center;'><span style='display:inline-block;transform:scaleX(0.932);transform-origin:center;'>#</span></div><div class=t style='top:767.97px;font-size:15.8px;color:#000;right:204.70px;text-align:right;'><span style='display:inline-block;transform:scaleX(0.929);transform-origin:right;'>1.0</span></div><div class=t style='top:767.97px;font-size:15.8px;color:#000;right:111.70px;text-align:right;'><span style='display:inline-block;transform:scaleX(0.929);transform-origin:right;'>1.0</span></div><div class=t style='top:767.97px;font-size:15.8px;color:#000;right:18.80px;text-align:right;'><span style='display:inline-block;transform:scaleX(0.929);transform-origin:right;'>1.0</span></div><div class=t style='top:790.97px;font-size:15.8px;color:#000;left:141.40px;'><span style='display:inline-block;transform:scaleX(0.990);transform-origin:left;'>Customer Support</span></div><div class=t style='top:791.67px;font-size:15.8px;color:#000;left:1281.10px;width:600px;text-align:center;'><span style='display:inline-block;transform:scaleX(0.932);transform-origin:center;'>#</span></div><div class=t style='top:790.97px;font-size:15.8px;color:#000;right:204.70px;text-align:right;'><span style='display:inline-block;transform:scaleX(0.929);transform-origin:right;'>1.0</span></div><div class=t style='top:790.97px;font-size:15.8px;color:#000;right:111.70px;text-align:right;'><span style='display:inline-block;transform:scaleX(0.929);transform-origin:right;'>1.0</span></div><div class=t style='top:790.97px;font-size:15.8px;color:#000;right:18.80px;text-align:right;'><span style='display:inline-block;transform:scaleX(0.929);transform-origin:right;'>1.0</span></div><div class=t style='top:813.97px;font-size:15.8px;color:#000;left:141.40px;'><span style='display:inline-block;transform:scaleX(0.879);transform-origin:left;'>Sales Reps</span></div><div class=t style='top:814.67px;font-size:15.8px;color:#000;left:1281.10px;width:600px;text-align:center;'><span style='display:inline-block;transform:scaleX(0.932);transform-origin:center;'>#</span></div><div class=t style='top:813.97px;font-size:15.8px;color:#000;right:204.70px;text-align:right;'><span style='display:inline-block;transform:scaleX(0.929);transform-origin:right;'>1.0</span></div><div class=t style='top:813.97px;font-size:15.8px;color:#000;right:111.70px;text-align:right;'><span style='display:inline-block;transform:scaleX(0.929);transform-origin:right;'>1.0</span></div><div class=t style='top:813.97px;font-size:15.8px;color:#000;right:18.80px;text-align:right;'><span style='display:inline-block;transform:scaleX(0.929);transform-origin:right;'>1.0</span></div><div class=t style='top:836.97px;font-size:15.8px;color:#000;left:141.40px;'>Operations / G&amp;A</div><div class=t style='top:837.67px;font-size:15.8px;color:#000;left:1281.10px;width:600px;text-align:center;'><span style='display:inline-block;transform:scaleX(0.932);transform-origin:center;'>#</span></div><div class=t style='top:836.97px;font-size:15.8px;color:#000;right:204.70px;text-align:right;'><span style='display:inline-block;transform:scaleX(0.929);transform-origin:right;'>1.0</span></div><div class=t style='top:836.97px;font-size:15.8px;color:#000;right:111.70px;text-align:right;'><span style='display:inline-block;transform:scaleX(0.929);transform-origin:right;'>1.0</span></div><div class=t style='top:836.97px;font-size:15.8px;color:#000;right:18.80px;text-align:right;'><span style='display:inline-block;transform:scaleX(0.929);transform-origin:right;'>1.0</span></div><div class=t style='top:859.97px;font-size:15.8px;color:#000;left:141.40px;'><span style='display:inline-block;transform:scaleX(0.964);transform-origin:left;'>Others 1</span></div><div class=t style='top:860.67px;font-size:15.8px;color:#000;left:1281.10px;width:600px;text-align:center;'><span style='display:inline-block;transform:scaleX(0.932);transform-origin:center;'>#</span></div><div class=t style='top:859.97px;font-size:15.8px;color:#000;right:204.30px;text-align:right;'><span style='display:inline-block;transform:scaleX(0.900);transform-origin:right;'>-</span></div><div class=t style='top:859.97px;font-size:15.8px;color:#000;right:111.40px;text-align:right;'><span style='display:inline-block;transform:scaleX(0.900);transform-origin:right;'>-</span></div><div class=t style='top:882.97px;font-size:15.8px;color:#000;left:141.40px;'><span style='display:inline-block;transform:scaleX(0.964);transform-origin:left;'>Others 2</span></div><div class=t style='top:883.67px;font-size:15.8px;color:#000;left:1281.10px;width:600px;text-align:center;'><span style='display:inline-block;transform:scaleX(0.932);transform-origin:center;'>#</span></div><div class=t style='top:882.97px;font-size:15.8px;color:#000;right:204.30px;text-align:right;'><span style='display:inline-block;transform:scaleX(0.900);transform-origin:right;'>-</span></div><div class=t style='top:882.97px;font-size:15.8px;color:#000;right:111.40px;text-align:right;'><span style='display:inline-block;transform:scaleX(0.900);transform-origin:right;'>-</span></div></div></div><div class=b style='left:49px;top:76.5px;width:1845.40px;height:1.00px;background:#bcbcbc'></div><div class=b style='left:80.5px;top:75.5px;width:40.50px;height:30.50px;border:2.5px solid #217346;box-sizing:border-box;'></div><div class=b style='left:83px;top:78px;width:36.00px;height:26.00px;border:1px solid #fff;box-sizing:border-box;'></div><div class=b style='left:115.7px;top:100.9px;width:6.50px;height:6.10px;background:#fff'></div><div class=b style='left:116.7px;top:101.9px;width:5.50px;height:5.00px;background:#217346'></div><div class=b style='left:1894.4px;top:0px;width:26.60px;height:906.00px;background:#e6e6e6'></div><div class=b style='left:1894px;top:77px;width:1.00px;height:829.00px;background:#c6c6c6'></div><div class=b style='left:1898px;top:8px;width:19.00px;height:19.00px;background:#fff;border:1px solid #a0a0a0;box-sizing:border-box'></div><svg class=b style='left:1902px;top:13px' width='11' height='8'><polygon points='0.5,6.5 5.5,1 10.5,6.5' fill='#222'/></svg><div class=b style='left:1898px;top:26px;width:19.00px;height:92.00px;background:#fff;border:1px solid #a0a0a0;box-sizing:border-box'></div><div class=b style='left:1898px;top:887px;width:19.00px;height:19.00px;background:#fff;border:1px solid #a0a0a0;box-sizing:border-box'></div><svg class=b style='left:1902px;top:893px' width='11' height='8'><polygon points='0.5,1 10.5,1 5.5,6.5' fill='#222'/></svg><div class=b style='left:1898px;top:118px;width:19.00px;height:769.00px;background:#f2f2f2'></div><div class=b style='left:1894.3px;top:131px;width:1.00px;height:775.00px;background:#9c9c9c'></div><div class=b style='left:1919.5px;top:0px;width:1.50px;height:938.00px;background:#3a3a3a'></div><div class=b style='left:0px;top:906px;width:1921.00px;height:32.00px;background:#e6e6e6'></div><div class=b style='left:0px;top:905.8px;width:444.00px;height:1.00px;background:#a8a8a8'></div><div class=b style='left:540px;top:905.8px;width:1354.40px;height:1.00px;background:#a8a8a8'></div><div class=b style='left:0px;top:937.6px;width:1921.00px;height:1.00px;background:#c2c2c2'></div><svg class=b style='left:28px;top:915px' width='10' height='14'><polygon points='7.2,3 7.2,12.5 2.2,7.75' fill='#bdbdbd'/></svg><svg class=b style='left:60px;top:915px' width='10' height='14'><polygon points='2,2.8 2,12.3 7.2,7.55' fill='#1d6b3a'/></svg><div class=b style='left:112.0px;top:910px;width:1.00px;height:24.00px;background:#a0a0a0'></div><div class=b style='left:193.0px;top:910px;width:1.00px;height:24.00px;background:#a0a0a0'></div><div class=b style='left:283.2px;top:910px;width:1.00px;height:24.00px;background:#a0a0a0'></div><div class=b style='left:346.0px;top:910px;width:1.00px;height:24.00px;background:#a0a0a0'></div><div class=b style='left:442.0px;top:910px;width:1.00px;height:24.00px;background:#a0a0a0'></div><div class=b style='left:739.4px;top:910px;width:1.00px;height:24.00px;background:#a0a0a0'></div><div class=b style='left:829.2px;top:910px;width:1.00px;height:24.00px;background:#a0a0a0'></div><div class=b style='left:973.2px;top:910px;width:1.00px;height:24.00px;background:#a0a0a0'></div><div class=b style='left:1074.1px;top:910px;width:1.00px;height:24.00px;background:#a0a0a0'></div><div class=t style='top:911.98px;font-size:16.5px;color:#505050;left:125.70px;'><span style='display:inline-block;transform:scaleX(0.948);transform-origin:left;'>License</span></div><div class=t style='top:911.98px;font-size:16.5px;color:#505050;left:206.50px;'><span style='display:inline-block;transform:scaleX(0.957);transform-origin:left;'>Glossary</span></div><div class=b style='left:286px;top:909px;width:58.00px;height:26.00px;background:#03a04b'></div><div class=t style='top:911.98px;font-size:16.5px;color:#fff;left:297.00px;'><span style='display:inline-block;transform:scaleX(1.084);transform-origin:left;'>Intro</span></div><div class=b style='left:349.2px;top:909px;width:92.80px;height:26.00px;background:#2553d1'></div><div class=t style='top:911.98px;font-size:16.5px;color:#fff;left:359.00px;'><span style='display:inline-block;transform:scaleX(0.982);transform-origin:left;'>Revenues</span></div><div class=b style='left:542.2px;top:909px;width:194.60px;height:26.00px;background:#2553d1'></div><div class=t style='top:911.98px;font-size:16.5px;color:#fff;left:555.50px;'><span style='display:inline-block;transform:scaleX(1.029);transform-origin:left;'>CapEx &amp; Depreciation</span></div><div class=b style='left:741.9px;top:909px;width:85.10px;height:26.00px;background:#2553d1'></div><div class=t style='top:911.98px;font-size:16.5px;color:#fff;left:753.00px;'><span style='display:inline-block;transform:scaleX(1.031);transform-origin:left;'>Funding</span></div><div class=b style='left:832.3px;top:909px;width:138.50px;height:26.00px;background:#2553d1'></div><div class=t style='top:911.98px;font-size:16.5px;color:#fff;left:842.00px;'>Sources &amp; Uses</div><div class=b style='left:976.2px;top:909px;width:95.80px;height:26.00px;background:#2553d1'></div><div class=t style='top:911.98px;font-size:16.5px;color:#fff;left:987.00px;'><span style='display:inline-block;transform:scaleX(0.983);transform-origin:left;'>Financials</span></div><div class=b style='left:1077.2px;top:909px;width:44.8px;height:26px;overflow:hidden;background:#03a04b'><div class=b style='left:-1077.2px;top:-909px;width:1921px;height:966px'><div class=t style='top:911.98px;font-size:16.5px;color:#fff;left:1087.50px;'><span style='display:inline-block;transform:scaleX(1.031);transform-origin:left;'>Sum</span></div></div></div><div class=b style='left:444px;top:906px;width:96.00px;height:29.00px;background:#fff;border-left:1px solid #9a9a9a;border-right:1px solid #9a9a9a;box-sizing:border-box'></div><div class=b style='left:447px;top:909.7px;width:90.00px;height:22.30px;background:linear-gradient(#ffffff 0%,#dfe5f7 45%,#9fb2e8 100%)'></div><div class=b style='left:444px;top:933px;width:96.00px;height:2.00px;background:#1d6b37'></div><div class=t style='top:911.98px;font-size:16.5px;color:#1e6f3c;font-weight:700;left:456.80px;'><span style='display:inline-block;transform:scaleX(0.911);transform-origin:left;'>Expenses</span></div><div class=b style='left:1131.5px;top:923.7px;width:2.00px;height:2.00px;background:#1d6b3a'></div><div class=b style='left:1137px;top:923.7px;width:2.00px;height:2.00px;background:#1d6b3a'></div><div class=b style='left:1142.5px;top:923.7px;width:2.00px;height:2.00px;background:#1d6b3a'></div><svg class=b style='left:1158px;top:911px' width='24' height='24'><circle cx='12' cy='12' r='9.6' fill='none' stroke='#666' stroke-width='1.3'/><path d='M12 6.5V17.5M6.5 12H17.5' stroke='#666' stroke-width='1.6'/></svg><div class=b style='left:1200.7px;top:916.3px;width:2.20px;height:2.40px;background:#b4b4b4'></div><div class=b style='left:1200.7px;top:921.3px;width:2.20px;height:2.40px;background:#b4b4b4'></div><div class=b style='left:1200.7px;top:926.3px;width:2.20px;height:2.40px;background:#b4b4b4'></div><div class=b style='left:1238px;top:913.4px;width:635.20px;height:18.40px;background:#f2f2f2'></div><div class=b style='left:1220.3px;top:913.4px;width:18.70px;height:18.40px;background:#fff;border:1px solid #a0a0a0;box-sizing:border-box'></div><svg class=b style='left:1225px;top:917px' width='8' height='11'><polygon points='6.5,0.5 6.5,10.5 1,5.5' fill='#222'/></svg><div class=b style='left:1238.3px;top:913.4px;width:121.40px;height:18.40px;background:#fff;border:1px solid #a0a0a0;box-sizing:border-box'></div><div class=b style='left:1873.2px;top:913.4px;width:18.40px;height:18.40px;background:#fff;border:1px solid #a0a0a0;box-sizing:border-box'></div><svg class=b style='left:1879px;top:917px' width='8' height='11'><polygon points='1,0.5 1,10.5 6.5,5.5' fill='#222'/></svg><div class=b style='left:0px;top:938.6px;width:1921.00px;height:27.40px;background:#f3f3f3'></div><div class=b style='left:0px;top:964.8px;width:41.00px;height:1.20px;background:#a8a8a8'></div><div class=b style='left:41px;top:964.8px;width:1576.00px;height:1.20px;background:#858585'></div><div class=t style='top:945.70px;font-size:13.3px;color:#333;left:14.20px;'><span style='display:inline-block;transform:scaleX(0.918);transform-origin:left;'>Ready</span></div><div class=t style='top:945.70px;font-size:13.3px;color:#333;left:71.60px;'><span style='display:inline-block;transform:scaleX(0.915);transform-origin:left;'>Calculate</span></div><div class=t style='top:945.70px;font-size:13.3px;color:#222;font-weight:700;left:211.70px;'><span style='display:inline-block;transform:scaleX(0.950);transform-origin:left;'>Accessibility: Investigate</span></div><svg class=b style='left:140px;top:938px' width='80' height='28'><rect x='11.6' y='10.9' width='12.8' height='9.4' fill='none' stroke='#555' stroke-width='1.3'/><rect x='18.3' y='7.3' width='6.6' height='3.4' fill='#5a5a5a'/><circle cx='13.4' cy='9.4' r='3.5' fill='#5a5a5a'/><path d='M17.3 12.4h1.7M20.4 12.4h1.6M14.2 15.4h1.6M17.3 15.4h1.7M20.4 15.4h1.6M14.2 18.3h1.6M17.3 18.3h1.7M20.4 18.3h1.6' stroke='#555' stroke-width='1.1'/><path d='M54.5 7.6A6.6 6.6 0 1 0 55.6 21.4' fill='none' stroke='#555' stroke-width='1.2' stroke-dasharray='2 1.3'/><path d='M56.5 6v8.3M54.2 12.2l2.3 2.4 2.3-2.4M59.8 12.4h4.8M63 10.6l1.8 1.8-1.8 1.8' fill='none' stroke='#555' stroke-width='1.1'/><path d='M58.6 15.7L67.6 23.6' stroke='#444' stroke-width='2'/><path d='M67.3 15.9L58.8 23.1' stroke='#555' stroke-width='1.2'/></svg><div class=b style='left:1553.9px;top:938.6px;width:50.00px;height:26.40px;background:#c6c6c6'></div><svg class=b style='left:1570px;top:943px' width='18' height='18'><g fill='none' stroke='#666' stroke-width='1'><rect x='1.5' y='1.5' width='15' height='15'/><path d='M6.5 1.5v15M11.5 1.5v15M1.5 6.5h15M1.5 11.5h15'/></g></svg><svg class=b style='left:1619px;top:943px' width='19' height='18'><g fill='none' stroke='#666' stroke-width='1'><rect x='1.5' y='1.5' width='16' height='15'/><rect x='4.5' y='4.5' width='10' height='9'/><path d='M6.5 7h6M6.5 9.5h6M6.5 12h6' stroke-width='0.8'/></g></svg><svg class=b style='left:1669px;top:943px' width='19' height='18'><g fill='none' stroke='#666' stroke-width='1'><rect x='1.5' y='1.5' width='16' height='15'/><path d='M5.5 1.5v8h8M9.5 1.5v4M13.5 1.5v8'/></g></svg><div class=b style='left:1711px;top:951.5px;width:9.00px;height:1.30px;background:#444'></div><div class=b style='left:1727px;top:951.7px;width:125.00px;height:1.00px;background:#555'></div><div class=b style='left:1780px;top:945.5px;width:6.00px;height:14.00px;background:#444'></div><div class=b style='left:1788.5px;top:948px;width:1.00px;height:8.00px;background:#444'></div><div class=b style='left:1858px;top:951.7px;width:10.00px;height:1.00px;background:#444'></div><div class=b style='left:1862.5px;top:947px;width:1.00px;height:10.50px;background:#444'></div><div class=t style='top:946.20px;font-size:13.3px;color:#333;left:1884.00px;'><span style='display:inline-block;transform:scaleX(0.901);transform-origin:left;'>90%</span></div>
</body></html>
